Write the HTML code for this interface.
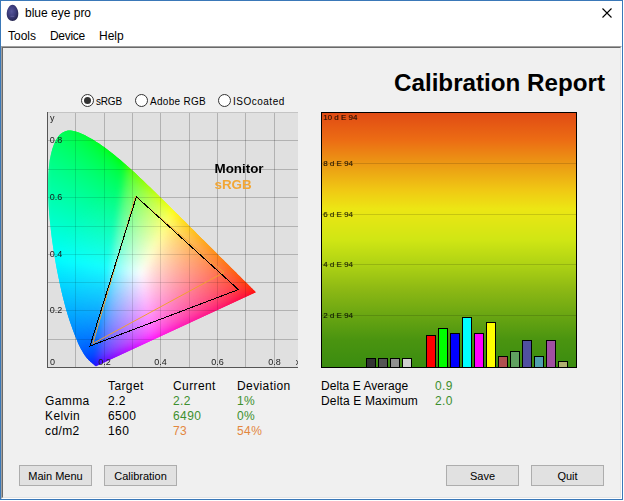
<!DOCTYPE html>
<html><head><meta charset="utf-8">
<style>
*{margin:0;padding:0;box-sizing:border-box}
html,body{width:624px;height:501px;overflow:hidden;background:#ffffff;font-family:"Liberation Sans",sans-serif;color:#000}
.a{position:absolute;white-space:nowrap}
#win{position:absolute;left:0;top:0;width:623px;height:500px;border:1px solid #3a78b8;background:#fff}
#content{position:absolute;left:1px;top:46px;width:621px;height:453px;background:#f0f0f0;border-top:1px solid #a0a0a0;border-left:1px solid #a0a0a0;border-right:1px solid #fff;border-bottom:1px solid #fff}
#content2{position:absolute;left:2px;top:47px;width:619px;height:451px;border-top:1px solid #696969;border-left:1px solid #696969;border-right:1px solid #e3e3e3;border-bottom:1px solid #e3e3e3}
.btn{position:absolute;top:465px;height:21px;width:73px;background:#e1e1e1;border:1px solid #adadad;font-size:11px;text-align:center;line-height:20px}
.radio{position:absolute;top:94px;width:13px;height:13px;border-radius:50%;border:1px solid #333;background:#fff}
.lbl{font-size:10px;top:96px!important}
.t12{font-size:12px;letter-spacing:0.4px}
.g{color:#3d8f2e}
.o{color:#e3873e}
.ax{font-size:8px;color:#222}
.de{font-size:8px;color:rgba(40,20,0,0.75)}
</style></head><body>
<div id="win"></div>
<!-- egg icon -->
<svg class="a" style="left:0;top:0" width="26" height="26" viewBox="0 0 26 26">
<defs><radialGradient id="eg" cx="0.42" cy="0.4" r="0.62"><stop offset="0" stop-color="#56569a"/><stop offset="0.55" stop-color="#3c3c7c"/><stop offset="1" stop-color="#24244e"/></radialGradient></defs>
<path d="M12.5 4.8C15.8 4.8 18.3 9.5 18.3 13.8C18.3 18.2 15.8 21 12.5 21C9.2 21 6.7 18.2 6.7 13.8C6.7 9.5 9.2 4.8 12.5 4.8Z" fill="url(#eg)"/>
<path d="M10.5 16.3L14.3 16.3" stroke="#7a7ab0" stroke-width="0.8" opacity="0.7"/>
</svg>
<div class="a" style="left:25px;top:6px;font-size:12px">blue eye pro</div>
<svg class="a" style="left:601px;top:7px" width="12" height="12" viewBox="0 0 12 12"><path d="M1.5 1.5L10.5 10.5M10.5 1.5L1.5 10.5" stroke="#000" stroke-width="1.1"/></svg>
<div class="a" style="left:8px;top:29px;font-size:12px">Tools</div>
<div class="a" style="left:50px;top:29px;font-size:12px;letter-spacing:-0.3px">Device</div>
<div class="a" style="left:99px;top:29px;font-size:12px">Help</div>
<div id="content"></div><div id="content2"></div>

<div class="a" style="left:394px;top:69px;font-size:24.2px;font-weight:bold">Calibration Report</div>

<!-- radios -->
<div class="radio" style="left:81px"><div style="position:absolute;left:2px;top:2px;width:7px;height:7px;border-radius:50%;background:#333"></div></div>
<div class="a lbl" style="left:96px;top:94px;letter-spacing:-0.2px">sRGB</div>
<div class="radio" style="left:135px"></div>
<div class="a lbl" style="left:150px;top:94px;letter-spacing:0.3px">Adobe RGB</div>
<div class="radio" style="left:218px"></div>
<div class="a lbl" style="left:233px;top:94px;letter-spacing:0.5px">ISOcoated</div>

<!-- CIE plot -->
<div class="a" style="left:47px;top:112px;width:251px;height:256px;background:#e0e0e0;overflow:hidden">
<svg class="a" style="left:0;top:0" width="251" height="256">
<defs>
<filter id="fblur" x="-5%" y="-5%" width="110%" height="110%"><feGaussianBlur stdDeviation="3"/></filter>
<clipPath id="lc"><polygon points="49.4,254.1 49.4,254.1 49.3,254.2 49.3,254.2 49.2,254.2 49.2,254.2 49.2,254.2 49.1,254.2 49.1,254.2 49.0,254.2 48.9,254.2 48.9,254.2 48.8,254.2 48.8,254.2 48.7,254.2 48.7,254.1 48.6,254.1 48.5,254.1 48.5,254.0 48.4,254.0 48.3,253.9 48.2,253.8 48.1,253.8 48.0,253.7 47.9,253.6 47.8,253.5 47.6,253.4 47.5,253.3 47.3,253.1 47.2,253.0 47.0,252.8 46.8,252.6 46.6,252.5 46.4,252.3 46.2,252.1 45.9,251.9 45.7,251.6 45.4,251.4 45.1,251.1 44.8,250.8 44.4,250.5 44.0,250.2 43.7,249.9 43.2,249.5 42.8,249.1 42.4,248.7 41.9,248.2 41.4,247.7 40.8,247.1 40.3,246.5 39.7,245.9 39.1,245.1 38.4,244.2 37.7,243.2 36.9,242.0 36.1,240.7 35.2,239.1 34.2,237.4 33.2,235.5 32.2,233.4 31.0,230.9 29.9,228.1 28.6,225.1 27.3,221.7 25.8,217.8 24.3,213.6 22.7,209.0 21.1,204.0 19.4,198.5 17.8,192.5 16.1,186.0 14.4,179.1 12.8,171.7 11.2,163.9 9.5,155.6 8.0,146.9 6.6,138.3 5.3,129.4 4.1,120.4 3.1,111.3 2.2,102.5 1.6,94.0 1.2,85.5 1.0,77.3 1.0,69.5 1.3,62.0 1.9,54.9 2.7,48.3 3.9,42.4 5.3,37.0 7.0,32.3 8.9,28.2 11.0,24.8 13.2,22.2 15.7,20.5 18.3,19.3 21.0,18.6 23.8,18.5 26.6,18.9 29.5,19.8 32.4,20.8 35.2,21.9 38.1,23.3 41.0,24.9 43.9,26.5 46.6,28.1 49.4,29.9 52.1,31.6 54.7,33.4 57.4,35.3 60.0,37.2 62.6,39.2 65.2,41.2 67.7,43.3 70.3,45.4 72.9,47.5 75.4,49.7 78.0,51.9 80.5,54.2 83.1,56.5 85.6,58.8 88.2,61.1 90.7,63.5 93.2,65.9 95.8,68.3 98.3,70.7 100.8,73.2 103.4,75.6 105.9,78.1 108.5,80.5 111.0,83.0 113.5,85.5 116.1,88.0 118.6,90.5 121.1,93.0 123.6,95.4 126.1,97.9 128.6,100.4 131.1,102.8 133.5,105.3 136.0,107.7 138.4,110.1 140.8,112.5 143.2,114.9 145.6,117.3 147.9,119.6 150.2,121.9 152.5,124.2 154.7,126.4 156.9,128.6 159.1,130.8 161.3,132.9 163.4,135.0 165.4,137.0 167.4,139.0 169.4,141.0 171.2,142.9 173.0,144.7 174.8,146.4 176.5,148.1 178.1,149.7 179.7,151.3 181.2,152.8 182.7,154.3 184.1,155.7 185.4,156.9 186.5,158.1 187.7,159.3 189.1,160.6 190.8,162.4 192.8,164.3 194.7,166.2 196.4,167.9 197.8,169.3 199.0,170.5 200.1,171.6 201.1,172.6 202.0,173.5 202.8,174.3 203.6,175.1 204.2,175.7 204.8,176.3 205.4,176.8 205.8,177.3 206.2,177.7 206.6,178.0 206.9,178.3 207.1,178.6 207.4,178.8 207.6,179.1 207.9,179.4 208.1,179.6 208.3,179.8 208.5,179.9 208.6,180.0 208.6,180.1 208.7,180.2 208.7,180.2"/></clipPath>
</defs>
<g fill="#000" fill-opacity="0.09"><rect x="28" y="0" width="1" height="256"/><rect x="57" y="0" width="1" height="256"/><rect x="85" y="0" width="1" height="256"/><rect x="113" y="0" width="1" height="256"/><rect x="142" y="0" width="1" height="256"/><rect x="170" y="0" width="1" height="256"/><rect x="198" y="0" width="1" height="256"/><rect x="227" y="0" width="1" height="256"/><rect x="0" y="227" width="251" height="1"/><rect x="0" y="198" width="251" height="1"/><rect x="0" y="170" width="251" height="1"/><rect x="0" y="142" width="251" height="1"/><rect x="0" y="114" width="251" height="1"/><rect x="0" y="85" width="251" height="1"/><rect x="0" y="57" width="251" height="1"/><rect x="0" y="28" width="251" height="1"/></g>
<g clip-path="url(#lc)"><g filter="url(#fblur)"><rect x="0" y="6" width="6" height="6" fill="#00ff55"/><rect x="6" y="6" width="6" height="6" fill="#00ff4d"/><rect x="12" y="6" width="6" height="6" fill="#00ff44"/><rect x="18" y="6" width="6" height="6" fill="#00ff3a"/><rect x="24" y="6" width="6" height="6" fill="#00ff2c"/><rect x="30" y="6" width="6" height="6" fill="#00ff11"/><rect x="36" y="6" width="6" height="6" fill="#00ff00"/><rect x="42" y="6" width="6" height="6" fill="#00ff00"/><rect x="48" y="6" width="6" height="6" fill="#00ff00"/><rect x="0" y="12" width="6" height="6" fill="#00ff5d"/><rect x="6" y="12" width="6" height="6" fill="#00ff56"/><rect x="12" y="12" width="6" height="6" fill="#00ff4f"/><rect x="18" y="12" width="6" height="6" fill="#00ff46"/><rect x="24" y="12" width="6" height="6" fill="#00ff3b"/><rect x="30" y="12" width="6" height="6" fill="#00ff2d"/><rect x="36" y="12" width="6" height="6" fill="#00ff12"/><rect x="42" y="12" width="6" height="6" fill="#00ff00"/><rect x="48" y="12" width="6" height="6" fill="#00ff00"/><rect x="54" y="12" width="6" height="6" fill="#00ff00"/><rect x="0" y="18" width="6" height="6" fill="#00ff65"/><rect x="6" y="18" width="6" height="6" fill="#00ff5e"/><rect x="12" y="18" width="6" height="6" fill="#00ff58"/><rect x="18" y="18" width="6" height="6" fill="#00ff50"/><rect x="24" y="18" width="6" height="6" fill="#00ff47"/><rect x="30" y="18" width="6" height="6" fill="#00ff3c"/><rect x="36" y="18" width="6" height="6" fill="#00ff2e"/><rect x="42" y="18" width="6" height="6" fill="#00ff13"/><rect x="48" y="18" width="6" height="6" fill="#00ff00"/><rect x="54" y="18" width="6" height="6" fill="#00ff00"/><rect x="60" y="18" width="6" height="6" fill="#00ff00"/><rect x="0" y="24" width="6" height="6" fill="#00ff6c"/><rect x="6" y="24" width="6" height="6" fill="#00ff66"/><rect x="12" y="24" width="6" height="6" fill="#00ff60"/><rect x="18" y="24" width="6" height="6" fill="#00ff59"/><rect x="24" y="24" width="6" height="6" fill="#00ff51"/><rect x="30" y="24" width="6" height="6" fill="#00ff48"/><rect x="36" y="24" width="6" height="6" fill="#00ff3d"/><rect x="42" y="24" width="6" height="6" fill="#00ff2f"/><rect x="48" y="24" width="6" height="6" fill="#00ff14"/><rect x="54" y="24" width="6" height="6" fill="#00ff00"/><rect x="60" y="24" width="6" height="6" fill="#00ff00"/><rect x="66" y="24" width="6" height="6" fill="#00ff00"/><rect x="0" y="30" width="6" height="6" fill="#00ff73"/><rect x="6" y="30" width="6" height="6" fill="#00ff6e"/><rect x="12" y="30" width="6" height="6" fill="#00ff68"/><rect x="18" y="30" width="6" height="6" fill="#00ff62"/><rect x="24" y="30" width="6" height="6" fill="#00ff5b"/><rect x="30" y="30" width="6" height="6" fill="#00ff53"/><rect x="36" y="30" width="6" height="6" fill="#00ff4a"/><rect x="42" y="30" width="6" height="6" fill="#00ff3f"/><rect x="48" y="30" width="6" height="6" fill="#00ff30"/><rect x="54" y="30" width="6" height="6" fill="#00ff15"/><rect x="60" y="30" width="6" height="6" fill="#00ff00"/><rect x="66" y="30" width="6" height="6" fill="#00ff00"/><rect x="72" y="30" width="6" height="6" fill="#00ff00"/><rect x="0" y="36" width="6" height="6" fill="#00ff7a"/><rect x="6" y="36" width="6" height="6" fill="#00ff75"/><rect x="12" y="36" width="6" height="6" fill="#00ff70"/><rect x="18" y="36" width="6" height="6" fill="#00ff6a"/><rect x="24" y="36" width="6" height="6" fill="#00ff64"/><rect x="30" y="36" width="6" height="6" fill="#00ff5d"/><rect x="36" y="36" width="6" height="6" fill="#00ff55"/><rect x="42" y="36" width="6" height="6" fill="#00ff4b"/><rect x="48" y="36" width="6" height="6" fill="#00ff40"/><rect x="54" y="36" width="6" height="6" fill="#00ff31"/><rect x="60" y="36" width="6" height="6" fill="#00ff15"/><rect x="66" y="36" width="6" height="6" fill="#00ff00"/><rect x="72" y="36" width="6" height="6" fill="#00ff00"/><rect x="78" y="36" width="6" height="6" fill="#09ff00"/><rect x="0" y="42" width="6" height="6" fill="#00ff81"/><rect x="6" y="42" width="6" height="6" fill="#00ff7c"/><rect x="12" y="42" width="6" height="6" fill="#00ff77"/><rect x="18" y="42" width="6" height="6" fill="#00ff72"/><rect x="24" y="42" width="6" height="6" fill="#00ff6c"/><rect x="30" y="42" width="6" height="6" fill="#00ff66"/><rect x="36" y="42" width="6" height="6" fill="#00ff5f"/><rect x="42" y="42" width="6" height="6" fill="#00ff56"/><rect x="48" y="42" width="6" height="6" fill="#00ff4d"/><rect x="54" y="42" width="6" height="6" fill="#00ff42"/><rect x="60" y="42" width="6" height="6" fill="#00ff33"/><rect x="66" y="42" width="6" height="6" fill="#00ff16"/><rect x="72" y="42" width="6" height="6" fill="#00ff00"/><rect x="78" y="42" width="6" height="6" fill="#1bff00"/><rect x="84" y="42" width="6" height="6" fill="#4aff00"/><rect x="0" y="48" width="6" height="6" fill="#00ff88"/><rect x="6" y="48" width="6" height="6" fill="#00ff83"/><rect x="12" y="48" width="6" height="6" fill="#00ff7f"/><rect x="18" y="48" width="6" height="6" fill="#00ff7a"/><rect x="24" y="48" width="6" height="6" fill="#00ff74"/><rect x="30" y="48" width="6" height="6" fill="#00ff6e"/><rect x="36" y="48" width="6" height="6" fill="#00ff68"/><rect x="42" y="48" width="6" height="6" fill="#00ff61"/><rect x="48" y="48" width="6" height="6" fill="#00ff58"/><rect x="54" y="48" width="6" height="6" fill="#00ff4f"/><rect x="60" y="48" width="6" height="6" fill="#00ff43"/><rect x="66" y="48" width="6" height="6" fill="#00ff34"/><rect x="72" y="48" width="6" height="6" fill="#00ff17"/><rect x="78" y="48" width="6" height="6" fill="#33ff00"/><rect x="84" y="48" width="6" height="6" fill="#55ff00"/><rect x="90" y="48" width="6" height="6" fill="#6cff00"/><rect x="0" y="54" width="6" height="6" fill="#00ff8f"/><rect x="6" y="54" width="6" height="6" fill="#00ff8a"/><rect x="12" y="54" width="6" height="6" fill="#00ff86"/><rect x="18" y="54" width="6" height="6" fill="#00ff81"/><rect x="24" y="54" width="6" height="6" fill="#00ff7c"/><rect x="30" y="54" width="6" height="6" fill="#00ff77"/><rect x="36" y="54" width="6" height="6" fill="#00ff71"/><rect x="42" y="54" width="6" height="6" fill="#00ff6a"/><rect x="48" y="54" width="6" height="6" fill="#00ff63"/><rect x="54" y="54" width="6" height="6" fill="#00ff5a"/><rect x="60" y="54" width="6" height="6" fill="#00ff51"/><rect x="66" y="54" width="6" height="6" fill="#00ff45"/><rect x="72" y="54" width="6" height="6" fill="#03ff36"/><rect x="78" y="54" width="6" height="6" fill="#3eff19"/><rect x="84" y="54" width="6" height="6" fill="#5fff01"/><rect x="90" y="54" width="6" height="6" fill="#74ff00"/><rect x="96" y="54" width="6" height="6" fill="#86ff00"/><rect x="0" y="60" width="6" height="6" fill="#00ff95"/><rect x="6" y="60" width="6" height="6" fill="#00ff91"/><rect x="12" y="60" width="6" height="6" fill="#00ff8d"/><rect x="18" y="60" width="6" height="6" fill="#00ff89"/><rect x="24" y="60" width="6" height="6" fill="#00ff84"/><rect x="30" y="60" width="6" height="6" fill="#00ff7f"/><rect x="36" y="60" width="6" height="6" fill="#00ff79"/><rect x="42" y="60" width="6" height="6" fill="#00ff73"/><rect x="48" y="60" width="6" height="6" fill="#00ff6c"/><rect x="54" y="60" width="6" height="6" fill="#00ff65"/><rect x="60" y="60" width="6" height="6" fill="#00ff5c"/><rect x="66" y="60" width="6" height="6" fill="#00ff53"/><rect x="72" y="60" width="6" height="6" fill="#0bff47"/><rect x="78" y="60" width="6" height="6" fill="#46ff37"/><rect x="84" y="60" width="6" height="6" fill="#66ff1b"/><rect x="90" y="60" width="6" height="6" fill="#7dff01"/><rect x="96" y="60" width="6" height="6" fill="#8eff00"/><rect x="102" y="60" width="6" height="6" fill="#9dff00"/><rect x="0" y="66" width="6" height="6" fill="#00ff9c"/><rect x="6" y="66" width="6" height="6" fill="#00ff98"/><rect x="12" y="66" width="6" height="6" fill="#00ff94"/><rect x="18" y="66" width="6" height="6" fill="#00ff90"/><rect x="24" y="66" width="6" height="6" fill="#00ff8c"/><rect x="30" y="66" width="6" height="6" fill="#00ff87"/><rect x="36" y="66" width="6" height="6" fill="#00ff82"/><rect x="42" y="66" width="6" height="6" fill="#00ff7c"/><rect x="48" y="66" width="6" height="6" fill="#00ff76"/><rect x="54" y="66" width="6" height="6" fill="#00ff6f"/><rect x="60" y="66" width="6" height="6" fill="#00ff67"/><rect x="66" y="66" width="6" height="6" fill="#00ff5f"/><rect x="72" y="66" width="6" height="6" fill="#11ff55"/><rect x="78" y="66" width="6" height="6" fill="#4dff49"/><rect x="84" y="66" width="6" height="6" fill="#6cff39"/><rect x="90" y="66" width="6" height="6" fill="#83ff1d"/><rect x="96" y="66" width="6" height="6" fill="#96ff02"/><rect x="102" y="66" width="6" height="6" fill="#a5ff00"/><rect x="108" y="66" width="6" height="6" fill="#b3ff00"/><rect x="0" y="72" width="6" height="6" fill="#00ffa3"/><rect x="6" y="72" width="6" height="6" fill="#00ff9f"/><rect x="12" y="72" width="6" height="6" fill="#00ff9c"/><rect x="18" y="72" width="6" height="6" fill="#00ff98"/><rect x="24" y="72" width="6" height="6" fill="#00ff93"/><rect x="30" y="72" width="6" height="6" fill="#00ff8f"/><rect x="36" y="72" width="6" height="6" fill="#00ff8a"/><rect x="42" y="72" width="6" height="6" fill="#00ff84"/><rect x="48" y="72" width="6" height="6" fill="#00ff7f"/><rect x="54" y="72" width="6" height="6" fill="#00ff78"/><rect x="60" y="72" width="6" height="6" fill="#00ff72"/><rect x="66" y="72" width="6" height="6" fill="#00ff6a"/><rect x="72" y="72" width="6" height="6" fill="#1dff61"/><rect x="78" y="72" width="6" height="6" fill="#54ff57"/><rect x="84" y="72" width="6" height="6" fill="#71ff4b"/><rect x="90" y="72" width="6" height="6" fill="#88ff3b"/><rect x="96" y="72" width="6" height="6" fill="#9cff1f"/><rect x="102" y="72" width="6" height="6" fill="#adff02"/><rect x="108" y="72" width="6" height="6" fill="#bbff00"/><rect x="114" y="72" width="6" height="6" fill="#c8ff00"/><rect x="0" y="78" width="6" height="6" fill="#00ffaa"/><rect x="6" y="78" width="6" height="6" fill="#00ffa6"/><rect x="12" y="78" width="6" height="6" fill="#00ffa3"/><rect x="18" y="78" width="6" height="6" fill="#00ff9f"/><rect x="24" y="78" width="6" height="6" fill="#00ff9b"/><rect x="30" y="78" width="6" height="6" fill="#00ff97"/><rect x="36" y="78" width="6" height="6" fill="#00ff92"/><rect x="42" y="78" width="6" height="6" fill="#00ff8d"/><rect x="48" y="78" width="6" height="6" fill="#00ff88"/><rect x="54" y="78" width="6" height="6" fill="#00ff82"/><rect x="60" y="78" width="6" height="6" fill="#00ff7b"/><rect x="66" y="78" width="6" height="6" fill="#00ff74"/><rect x="72" y="78" width="6" height="6" fill="#24ff6d"/><rect x="78" y="78" width="6" height="6" fill="#5aff64"/><rect x="84" y="78" width="6" height="6" fill="#77ff59"/><rect x="90" y="78" width="6" height="6" fill="#8eff4d"/><rect x="96" y="78" width="6" height="6" fill="#a2ff3d"/><rect x="102" y="78" width="6" height="6" fill="#b3ff20"/><rect x="108" y="78" width="6" height="6" fill="#c3ff02"/><rect x="114" y="78" width="6" height="6" fill="#d0ff00"/><rect x="120" y="78" width="6" height="6" fill="#dcff00"/><rect x="0" y="84" width="6" height="6" fill="#00ffb1"/><rect x="6" y="84" width="6" height="6" fill="#00ffae"/><rect x="12" y="84" width="6" height="6" fill="#00ffaa"/><rect x="18" y="84" width="6" height="6" fill="#00ffa6"/><rect x="24" y="84" width="6" height="6" fill="#00ffa3"/><rect x="30" y="84" width="6" height="6" fill="#00ff9f"/><rect x="36" y="84" width="6" height="6" fill="#00ff9a"/><rect x="42" y="84" width="6" height="6" fill="#00ff95"/><rect x="48" y="84" width="6" height="6" fill="#00ff90"/><rect x="54" y="84" width="6" height="6" fill="#00ff8b"/><rect x="60" y="84" width="6" height="6" fill="#00ff85"/><rect x="66" y="84" width="6" height="6" fill="#00ff7f"/><rect x="72" y="84" width="6" height="6" fill="#34ff78"/><rect x="78" y="84" width="6" height="6" fill="#61ff70"/><rect x="84" y="84" width="6" height="6" fill="#7dff67"/><rect x="90" y="84" width="6" height="6" fill="#94ff5c"/><rect x="96" y="84" width="6" height="6" fill="#a7ff4f"/><rect x="102" y="84" width="6" height="6" fill="#b9ff3f"/><rect x="108" y="84" width="6" height="6" fill="#caff22"/><rect x="114" y="84" width="6" height="6" fill="#d9ff02"/><rect x="120" y="84" width="6" height="6" fill="#e5ff00"/><rect x="126" y="84" width="6" height="6" fill="#f2ff00"/><rect x="0" y="90" width="6" height="6" fill="#00ffb8"/><rect x="6" y="90" width="6" height="6" fill="#00ffb5"/><rect x="12" y="90" width="6" height="6" fill="#00ffb2"/><rect x="18" y="90" width="6" height="6" fill="#00ffae"/><rect x="24" y="90" width="6" height="6" fill="#00ffaa"/><rect x="30" y="90" width="6" height="6" fill="#00ffa7"/><rect x="36" y="90" width="6" height="6" fill="#00ffa2"/><rect x="42" y="90" width="6" height="6" fill="#00ff9e"/><rect x="48" y="90" width="6" height="6" fill="#00ff99"/><rect x="54" y="90" width="6" height="6" fill="#00ff94"/><rect x="60" y="90" width="6" height="6" fill="#00ff8f"/><rect x="66" y="90" width="6" height="6" fill="#00ff89"/><rect x="72" y="90" width="6" height="6" fill="#3fff82"/><rect x="78" y="90" width="6" height="6" fill="#68ff7b"/><rect x="84" y="90" width="6" height="6" fill="#83ff73"/><rect x="90" y="90" width="6" height="6" fill="#99ff6a"/><rect x="96" y="90" width="6" height="6" fill="#adff5f"/><rect x="102" y="90" width="6" height="6" fill="#bfff52"/><rect x="108" y="90" width="6" height="6" fill="#d0ff41"/><rect x="114" y="90" width="6" height="6" fill="#e0ff24"/><rect x="120" y="90" width="6" height="6" fill="#eeff03"/><rect x="126" y="90" width="6" height="6" fill="#fbff00"/><rect x="132" y="90" width="6" height="6" fill="#fff700"/><rect x="0" y="96" width="6" height="6" fill="#00ffbf"/><rect x="6" y="96" width="6" height="6" fill="#00ffbc"/><rect x="12" y="96" width="6" height="6" fill="#00ffb9"/><rect x="18" y="96" width="6" height="6" fill="#00ffb6"/><rect x="24" y="96" width="6" height="6" fill="#00ffb2"/><rect x="30" y="96" width="6" height="6" fill="#00ffaf"/><rect x="36" y="96" width="6" height="6" fill="#00ffab"/><rect x="42" y="96" width="6" height="6" fill="#00ffa7"/><rect x="48" y="96" width="6" height="6" fill="#00ffa2"/><rect x="54" y="96" width="6" height="6" fill="#00ff9d"/><rect x="60" y="96" width="6" height="6" fill="#00ff98"/><rect x="66" y="96" width="6" height="6" fill="#07ff93"/><rect x="72" y="96" width="6" height="6" fill="#49ff8d"/><rect x="78" y="96" width="6" height="6" fill="#6eff86"/><rect x="84" y="96" width="6" height="6" fill="#89ff7f"/><rect x="90" y="96" width="6" height="6" fill="#9fff76"/><rect x="96" y="96" width="6" height="6" fill="#b3ff6d"/><rect x="102" y="96" width="6" height="6" fill="#c6ff62"/><rect x="108" y="96" width="6" height="6" fill="#d7ff55"/><rect x="114" y="96" width="6" height="6" fill="#e7ff43"/><rect x="120" y="96" width="6" height="6" fill="#f7ff26"/><rect x="126" y="96" width="6" height="6" fill="#fff903"/><rect x="132" y="96" width="6" height="6" fill="#ffee00"/><rect x="138" y="96" width="6" height="6" fill="#ffe400"/><rect x="0" y="102" width="6" height="6" fill="#00ffc7"/><rect x="6" y="102" width="6" height="6" fill="#00ffc4"/><rect x="12" y="102" width="6" height="6" fill="#00ffc1"/><rect x="18" y="102" width="6" height="6" fill="#00ffbe"/><rect x="24" y="102" width="6" height="6" fill="#00ffba"/><rect x="30" y="102" width="6" height="6" fill="#00ffb7"/><rect x="36" y="102" width="6" height="6" fill="#00ffb3"/><rect x="42" y="102" width="6" height="6" fill="#00ffaf"/><rect x="48" y="102" width="6" height="6" fill="#00ffab"/><rect x="54" y="102" width="6" height="6" fill="#00ffa7"/><rect x="60" y="102" width="6" height="6" fill="#00ffa2"/><rect x="66" y="102" width="6" height="6" fill="#0eff9d"/><rect x="72" y="102" width="6" height="6" fill="#51ff97"/><rect x="78" y="102" width="6" height="6" fill="#75ff91"/><rect x="84" y="102" width="6" height="6" fill="#8fff8a"/><rect x="90" y="102" width="6" height="6" fill="#a6ff83"/><rect x="96" y="102" width="6" height="6" fill="#baff7a"/><rect x="102" y="102" width="6" height="6" fill="#ccff71"/><rect x="108" y="102" width="6" height="6" fill="#deff66"/><rect x="114" y="102" width="6" height="6" fill="#eeff58"/><rect x="120" y="102" width="6" height="6" fill="#fdfd46"/><rect x="126" y="102" width="6" height="6" fill="#fff126"/><rect x="132" y="102" width="6" height="6" fill="#ffe503"/><rect x="138" y="102" width="6" height="6" fill="#ffdb00"/><rect x="144" y="102" width="6" height="6" fill="#ffd200"/><rect x="0" y="108" width="6" height="6" fill="#00ffce"/><rect x="6" y="108" width="6" height="6" fill="#00ffcc"/><rect x="12" y="108" width="6" height="6" fill="#00ffc9"/><rect x="18" y="108" width="6" height="6" fill="#00ffc6"/><rect x="24" y="108" width="6" height="6" fill="#00ffc3"/><rect x="30" y="108" width="6" height="6" fill="#00ffbf"/><rect x="36" y="108" width="6" height="6" fill="#00ffbc"/><rect x="42" y="108" width="6" height="6" fill="#00ffb8"/><rect x="48" y="108" width="6" height="6" fill="#00ffb4"/><rect x="54" y="108" width="6" height="6" fill="#00ffb0"/><rect x="60" y="108" width="6" height="6" fill="#00ffac"/><rect x="66" y="108" width="6" height="6" fill="#18ffa7"/><rect x="72" y="108" width="6" height="6" fill="#59ffa2"/><rect x="78" y="108" width="6" height="6" fill="#7cff9c"/><rect x="84" y="108" width="6" height="6" fill="#96ff96"/><rect x="90" y="108" width="6" height="6" fill="#acff8f"/><rect x="96" y="108" width="6" height="6" fill="#c1ff87"/><rect x="102" y="108" width="6" height="6" fill="#d3ff7f"/><rect x="108" y="108" width="6" height="6" fill="#e5ff75"/><rect x="114" y="108" width="6" height="6" fill="#f6ff69"/><rect x="120" y="108" width="6" height="6" fill="#fff859"/><rect x="126" y="108" width="6" height="6" fill="#ffe943"/><rect x="132" y="108" width="6" height="6" fill="#ffdd25"/><rect x="138" y="108" width="6" height="6" fill="#ffd203"/><rect x="144" y="108" width="6" height="6" fill="#ffca00"/><rect x="150" y="108" width="6" height="6" fill="#ffc200"/><rect x="0" y="114" width="6" height="6" fill="#00ffd6"/><rect x="6" y="114" width="6" height="6" fill="#00ffd4"/><rect x="12" y="114" width="6" height="6" fill="#00ffd1"/><rect x="18" y="114" width="6" height="6" fill="#00ffce"/><rect x="24" y="114" width="6" height="6" fill="#00ffcb"/><rect x="30" y="114" width="6" height="6" fill="#00ffc8"/><rect x="36" y="114" width="6" height="6" fill="#00ffc5"/><rect x="42" y="114" width="6" height="6" fill="#00ffc1"/><rect x="48" y="114" width="6" height="6" fill="#00ffbe"/><rect x="54" y="114" width="6" height="6" fill="#00ffba"/><rect x="60" y="114" width="6" height="6" fill="#00ffb6"/><rect x="66" y="114" width="6" height="6" fill="#24ffb1"/><rect x="72" y="114" width="6" height="6" fill="#61ffac"/><rect x="78" y="114" width="6" height="6" fill="#83ffa7"/><rect x="84" y="114" width="6" height="6" fill="#9dffa1"/><rect x="90" y="114" width="6" height="6" fill="#b3ff9b"/><rect x="96" y="114" width="6" height="6" fill="#c8ff94"/><rect x="102" y="114" width="6" height="6" fill="#dbff8c"/><rect x="108" y="114" width="6" height="6" fill="#edff83"/><rect x="114" y="114" width="6" height="6" fill="#fdfd78"/><rect x="120" y="114" width="6" height="6" fill="#ffef67"/><rect x="126" y="114" width="6" height="6" fill="#ffe254"/><rect x="132" y="114" width="6" height="6" fill="#ffd640"/><rect x="138" y="114" width="6" height="6" fill="#ffcb24"/><rect x="144" y="114" width="6" height="6" fill="#ffc203"/><rect x="150" y="114" width="6" height="6" fill="#ffba00"/><rect x="156" y="114" width="6" height="6" fill="#ffb300"/><rect x="0" y="120" width="6" height="6" fill="#00ffde"/><rect x="6" y="120" width="6" height="6" fill="#00ffdc"/><rect x="12" y="120" width="6" height="6" fill="#00ffd9"/><rect x="18" y="120" width="6" height="6" fill="#00ffd7"/><rect x="24" y="120" width="6" height="6" fill="#00ffd4"/><rect x="30" y="120" width="6" height="6" fill="#00ffd1"/><rect x="36" y="120" width="6" height="6" fill="#00ffce"/><rect x="42" y="120" width="6" height="6" fill="#00ffcb"/><rect x="48" y="120" width="6" height="6" fill="#00ffc7"/><rect x="54" y="120" width="6" height="6" fill="#00ffc4"/><rect x="60" y="120" width="6" height="6" fill="#00ffc0"/><rect x="66" y="120" width="6" height="6" fill="#2fffbc"/><rect x="72" y="120" width="6" height="6" fill="#69ffb7"/><rect x="78" y="120" width="6" height="6" fill="#8affb2"/><rect x="84" y="120" width="6" height="6" fill="#a4ffad"/><rect x="90" y="120" width="6" height="6" fill="#bbffa7"/><rect x="96" y="120" width="6" height="6" fill="#d0ffa1"/><rect x="102" y="120" width="6" height="6" fill="#e3ff9a"/><rect x="108" y="120" width="6" height="6" fill="#f6ff92"/><rect x="114" y="120" width="6" height="6" fill="#fff784"/><rect x="120" y="120" width="6" height="6" fill="#ffe773"/><rect x="126" y="120" width="6" height="6" fill="#ffda62"/><rect x="132" y="120" width="6" height="6" fill="#ffce51"/><rect x="138" y="120" width="6" height="6" fill="#ffc43e"/><rect x="144" y="120" width="6" height="6" fill="#ffba23"/><rect x="150" y="120" width="6" height="6" fill="#ffb203"/><rect x="156" y="120" width="6" height="6" fill="#ffab00"/><rect x="162" y="120" width="6" height="6" fill="#ffa500"/><rect x="0" y="126" width="6" height="6" fill="#00ffe7"/><rect x="6" y="126" width="6" height="6" fill="#00ffe4"/><rect x="12" y="126" width="6" height="6" fill="#00ffe2"/><rect x="18" y="126" width="6" height="6" fill="#00ffe0"/><rect x="24" y="126" width="6" height="6" fill="#00ffdd"/><rect x="30" y="126" width="6" height="6" fill="#00ffda"/><rect x="36" y="126" width="6" height="6" fill="#00ffd8"/><rect x="42" y="126" width="6" height="6" fill="#00ffd5"/><rect x="48" y="126" width="6" height="6" fill="#00ffd1"/><rect x="54" y="126" width="6" height="6" fill="#00ffce"/><rect x="60" y="126" width="6" height="6" fill="#00ffca"/><rect x="66" y="126" width="6" height="6" fill="#40ffc6"/><rect x="72" y="126" width="6" height="6" fill="#71ffc2"/><rect x="78" y="126" width="6" height="6" fill="#91ffbe"/><rect x="84" y="126" width="6" height="6" fill="#acffb9"/><rect x="90" y="126" width="6" height="6" fill="#c3ffb3"/><rect x="96" y="126" width="6" height="6" fill="#d8ffae"/><rect x="102" y="126" width="6" height="6" fill="#ecffa7"/><rect x="108" y="126" width="6" height="6" fill="#fdfd9e"/><rect x="114" y="126" width="6" height="6" fill="#ffee8e"/><rect x="120" y="126" width="6" height="6" fill="#ffdf7d"/><rect x="126" y="126" width="6" height="6" fill="#ffd26d"/><rect x="132" y="126" width="6" height="6" fill="#ffc75e"/><rect x="138" y="126" width="6" height="6" fill="#ffbc4e"/><rect x="144" y="126" width="6" height="6" fill="#ffb33c"/><rect x="150" y="126" width="6" height="6" fill="#ffab22"/><rect x="156" y="126" width="6" height="6" fill="#ffa303"/><rect x="162" y="126" width="6" height="6" fill="#ff9d00"/><rect x="168" y="126" width="6" height="6" fill="#ff9700"/><rect x="0" y="132" width="6" height="6" fill="#00ffef"/><rect x="6" y="132" width="6" height="6" fill="#00ffed"/><rect x="12" y="132" width="6" height="6" fill="#00ffeb"/><rect x="18" y="132" width="6" height="6" fill="#00ffe9"/><rect x="24" y="132" width="6" height="6" fill="#00ffe7"/><rect x="30" y="132" width="6" height="6" fill="#00ffe4"/><rect x="36" y="132" width="6" height="6" fill="#00ffe1"/><rect x="42" y="132" width="6" height="6" fill="#00ffdf"/><rect x="48" y="132" width="6" height="6" fill="#00ffdc"/><rect x="54" y="132" width="6" height="6" fill="#00ffd9"/><rect x="60" y="132" width="6" height="6" fill="#02ffd5"/><rect x="66" y="132" width="6" height="6" fill="#4cffd2"/><rect x="72" y="132" width="6" height="6" fill="#7affce"/><rect x="78" y="132" width="6" height="6" fill="#99ffca"/><rect x="84" y="132" width="6" height="6" fill="#b4ffc5"/><rect x="90" y="132" width="6" height="6" fill="#cbffc0"/><rect x="96" y="132" width="6" height="6" fill="#e1ffbb"/><rect x="102" y="132" width="6" height="6" fill="#f5ffb5"/><rect x="108" y="132" width="6" height="6" fill="#fff5a8"/><rect x="114" y="132" width="6" height="6" fill="#ffe596"/><rect x="120" y="132" width="6" height="6" fill="#ffd686"/><rect x="126" y="132" width="6" height="6" fill="#ffca77"/><rect x="132" y="132" width="6" height="6" fill="#ffbf68"/><rect x="138" y="132" width="6" height="6" fill="#ffb55a"/><rect x="144" y="132" width="6" height="6" fill="#ffac4b"/><rect x="150" y="132" width="6" height="6" fill="#ffa43a"/><rect x="156" y="132" width="6" height="6" fill="#ff9c21"/><rect x="162" y="132" width="6" height="6" fill="#ff9503"/><rect x="168" y="132" width="6" height="6" fill="#ff9000"/><rect x="174" y="132" width="6" height="6" fill="#ff8a00"/><rect x="0" y="138" width="6" height="6" fill="#00fff8"/><rect x="6" y="138" width="6" height="6" fill="#00fff7"/><rect x="12" y="138" width="6" height="6" fill="#00fff5"/><rect x="18" y="138" width="6" height="6" fill="#00fff3"/><rect x="24" y="138" width="6" height="6" fill="#00fff0"/><rect x="30" y="138" width="6" height="6" fill="#00ffee"/><rect x="36" y="138" width="6" height="6" fill="#00ffec"/><rect x="42" y="138" width="6" height="6" fill="#00ffe9"/><rect x="48" y="138" width="6" height="6" fill="#00ffe7"/><rect x="54" y="138" width="6" height="6" fill="#00ffe4"/><rect x="60" y="138" width="6" height="6" fill="#0cffe1"/><rect x="66" y="138" width="6" height="6" fill="#57ffdd"/><rect x="72" y="138" width="6" height="6" fill="#82ffda"/><rect x="78" y="138" width="6" height="6" fill="#a1ffd6"/><rect x="84" y="138" width="6" height="6" fill="#bcffd2"/><rect x="90" y="138" width="6" height="6" fill="#d4ffce"/><rect x="96" y="138" width="6" height="6" fill="#eaffc9"/><rect x="102" y="138" width="6" height="6" fill="#fdfcc1"/><rect x="108" y="138" width="6" height="6" fill="#ffecaf"/><rect x="114" y="138" width="6" height="6" fill="#ffdc9e"/><rect x="120" y="138" width="6" height="6" fill="#ffce8e"/><rect x="126" y="138" width="6" height="6" fill="#ffc27f"/><rect x="132" y="138" width="6" height="6" fill="#ffb772"/><rect x="138" y="138" width="6" height="6" fill="#ffad64"/><rect x="144" y="138" width="6" height="6" fill="#ffa557"/><rect x="150" y="138" width="6" height="6" fill="#ff9c48"/><rect x="156" y="138" width="6" height="6" fill="#ff9538"/><rect x="162" y="138" width="6" height="6" fill="#ff8e21"/><rect x="168" y="138" width="6" height="6" fill="#ff8803"/><rect x="174" y="138" width="6" height="6" fill="#ff8200"/><rect x="180" y="138" width="6" height="6" fill="#ff7d00"/><rect x="0" y="144" width="6" height="6" fill="#00fcff"/><rect x="6" y="144" width="6" height="6" fill="#00fdfe"/><rect x="12" y="144" width="6" height="6" fill="#00fefe"/><rect x="18" y="144" width="6" height="6" fill="#00fffc"/><rect x="24" y="144" width="6" height="6" fill="#00fffb"/><rect x="30" y="144" width="6" height="6" fill="#00fff9"/><rect x="36" y="144" width="6" height="6" fill="#00fff7"/><rect x="42" y="144" width="6" height="6" fill="#00fff4"/><rect x="48" y="144" width="6" height="6" fill="#00fff2"/><rect x="54" y="144" width="6" height="6" fill="#00fff0"/><rect x="60" y="144" width="6" height="6" fill="#12ffed"/><rect x="66" y="144" width="6" height="6" fill="#62ffea"/><rect x="72" y="144" width="6" height="6" fill="#8bffe7"/><rect x="78" y="144" width="6" height="6" fill="#aaffe3"/><rect x="84" y="144" width="6" height="6" fill="#c5ffe0"/><rect x="90" y="144" width="6" height="6" fill="#deffdc"/><rect x="96" y="144" width="6" height="6" fill="#f5ffd7"/><rect x="102" y="144" width="6" height="6" fill="#fff4c9"/><rect x="108" y="144" width="6" height="6" fill="#ffe2b6"/><rect x="114" y="144" width="6" height="6" fill="#ffd2a5"/><rect x="120" y="144" width="6" height="6" fill="#ffc595"/><rect x="126" y="144" width="6" height="6" fill="#ffb987"/><rect x="132" y="144" width="6" height="6" fill="#ffaf7a"/><rect x="138" y="144" width="6" height="6" fill="#ffa66d"/><rect x="144" y="144" width="6" height="6" fill="#ff9d60"/><rect x="150" y="144" width="6" height="6" fill="#ff9554"/><rect x="156" y="144" width="6" height="6" fill="#ff8e46"/><rect x="162" y="144" width="6" height="6" fill="#ff8737"/><rect x="168" y="144" width="6" height="6" fill="#ff8020"/><rect x="174" y="144" width="6" height="6" fill="#ff7a03"/><rect x="180" y="144" width="6" height="6" fill="#ff7500"/><rect x="186" y="144" width="6" height="6" fill="#ff7000"/><rect x="0" y="150" width="6" height="6" fill="#00f3ff"/><rect x="6" y="150" width="6" height="6" fill="#00f4ff"/><rect x="12" y="150" width="6" height="6" fill="#00f5ff"/><rect x="18" y="150" width="6" height="6" fill="#00f7ff"/><rect x="24" y="150" width="6" height="6" fill="#00f8ff"/><rect x="30" y="150" width="6" height="6" fill="#00faff"/><rect x="36" y="150" width="6" height="6" fill="#00fcff"/><rect x="42" y="150" width="6" height="6" fill="#00fdfe"/><rect x="48" y="150" width="6" height="6" fill="#00fefd"/><rect x="54" y="150" width="6" height="6" fill="#00fffc"/><rect x="60" y="150" width="6" height="6" fill="#22fffa"/><rect x="66" y="150" width="6" height="6" fill="#6cfff7"/><rect x="72" y="150" width="6" height="6" fill="#94fff4"/><rect x="78" y="150" width="6" height="6" fill="#b4fff1"/><rect x="84" y="150" width="6" height="6" fill="#cfffee"/><rect x="90" y="150" width="6" height="6" fill="#e9ffeb"/><rect x="96" y="150" width="6" height="6" fill="#fdfbe3"/><rect x="102" y="150" width="6" height="6" fill="#ffe9cf"/><rect x="108" y="150" width="6" height="6" fill="#ffd8bc"/><rect x="114" y="150" width="6" height="6" fill="#ffc9ab"/><rect x="120" y="150" width="6" height="6" fill="#ffbc9c"/><rect x="126" y="150" width="6" height="6" fill="#ffb18e"/><rect x="132" y="150" width="6" height="6" fill="#ffa781"/><rect x="138" y="150" width="6" height="6" fill="#ff9d75"/><rect x="144" y="150" width="6" height="6" fill="#ff9569"/><rect x="150" y="150" width="6" height="6" fill="#ff8d5d"/><rect x="156" y="150" width="6" height="6" fill="#ff8651"/><rect x="162" y="150" width="6" height="6" fill="#ff7f44"/><rect x="168" y="150" width="6" height="6" fill="#ff7835"/><rect x="174" y="150" width="6" height="6" fill="#ff7220"/><rect x="180" y="150" width="6" height="6" fill="#ff6c03"/><rect x="186" y="150" width="6" height="6" fill="#ff6800"/><rect x="192" y="150" width="6" height="6" fill="#ff6300"/><rect x="0" y="156" width="6" height="6" fill="#00eaff"/><rect x="6" y="156" width="6" height="6" fill="#00ebff"/><rect x="12" y="156" width="6" height="6" fill="#00ecff"/><rect x="18" y="156" width="6" height="6" fill="#00edff"/><rect x="24" y="156" width="6" height="6" fill="#00eeff"/><rect x="30" y="156" width="6" height="6" fill="#00efff"/><rect x="36" y="156" width="6" height="6" fill="#00f0ff"/><rect x="42" y="156" width="6" height="6" fill="#00f2ff"/><rect x="48" y="156" width="6" height="6" fill="#00f4ff"/><rect x="54" y="156" width="6" height="6" fill="#00f5ff"/><rect x="60" y="156" width="6" height="6" fill="#2df7ff"/><rect x="66" y="156" width="6" height="6" fill="#74f9ff"/><rect x="72" y="156" width="6" height="6" fill="#9bfbff"/><rect x="78" y="156" width="6" height="6" fill="#bcfcfe"/><rect x="84" y="156" width="6" height="6" fill="#d9fefc"/><rect x="90" y="156" width="6" height="6" fill="#f4fefa"/><rect x="96" y="156" width="6" height="6" fill="#fff2eb"/><rect x="102" y="156" width="6" height="6" fill="#ffded4"/><rect x="108" y="156" width="6" height="6" fill="#ffcec1"/><rect x="114" y="156" width="6" height="6" fill="#ffbfb1"/><rect x="120" y="156" width="6" height="6" fill="#ffb3a2"/><rect x="126" y="156" width="6" height="6" fill="#ffa895"/><rect x="132" y="156" width="6" height="6" fill="#ff9e88"/><rect x="138" y="156" width="6" height="6" fill="#ff957c"/><rect x="144" y="156" width="6" height="6" fill="#ff8d71"/><rect x="150" y="156" width="6" height="6" fill="#ff8565"/><rect x="156" y="156" width="6" height="6" fill="#ff7e5a"/><rect x="162" y="156" width="6" height="6" fill="#ff774f"/><rect x="168" y="156" width="6" height="6" fill="#ff7042"/><rect x="174" y="156" width="6" height="6" fill="#ff6a34"/><rect x="180" y="156" width="6" height="6" fill="#ff6420"/><rect x="186" y="156" width="6" height="6" fill="#ff5e04"/><rect x="192" y="156" width="6" height="6" fill="#ff5900"/><rect x="198" y="156" width="6" height="6" fill="#ff5400"/><rect x="0" y="162" width="6" height="6" fill="#00e1ff"/><rect x="6" y="162" width="6" height="6" fill="#00e1ff"/><rect x="12" y="162" width="6" height="6" fill="#00e2ff"/><rect x="18" y="162" width="6" height="6" fill="#00e3ff"/><rect x="24" y="162" width="6" height="6" fill="#00e4ff"/><rect x="30" y="162" width="6" height="6" fill="#00e4ff"/><rect x="36" y="162" width="6" height="6" fill="#00e5ff"/><rect x="42" y="162" width="6" height="6" fill="#00e6ff"/><rect x="48" y="162" width="6" height="6" fill="#00e8ff"/><rect x="54" y="162" width="6" height="6" fill="#00e9ff"/><rect x="60" y="162" width="6" height="6" fill="#3beaff"/><rect x="66" y="162" width="6" height="6" fill="#77ebff"/><rect x="72" y="162" width="6" height="6" fill="#9dedff"/><rect x="78" y="162" width="6" height="6" fill="#bcefff"/><rect x="84" y="162" width="6" height="6" fill="#d9f0ff"/><rect x="90" y="162" width="6" height="6" fill="#f5f3ff"/><rect x="96" y="162" width="6" height="6" fill="#ffe6ef"/><rect x="102" y="162" width="6" height="6" fill="#ffd3d9"/><rect x="108" y="162" width="6" height="6" fill="#ffc3c7"/><rect x="114" y="162" width="6" height="6" fill="#ffb5b6"/><rect x="120" y="162" width="6" height="6" fill="#ffa9a8"/><rect x="126" y="162" width="6" height="6" fill="#ff9f9b"/><rect x="132" y="162" width="6" height="6" fill="#ff958e"/><rect x="138" y="162" width="6" height="6" fill="#ff8c83"/><rect x="144" y="162" width="6" height="6" fill="#ff8478"/><rect x="150" y="162" width="6" height="6" fill="#ff7c6d"/><rect x="156" y="162" width="6" height="6" fill="#ff7562"/><rect x="162" y="162" width="6" height="6" fill="#ff6e58"/><rect x="168" y="162" width="6" height="6" fill="#ff684d"/><rect x="174" y="162" width="6" height="6" fill="#ff6141"/><rect x="180" y="162" width="6" height="6" fill="#ff5b33"/><rect x="186" y="162" width="6" height="6" fill="#ff5520"/><rect x="192" y="162" width="6" height="6" fill="#ff4f05"/><rect x="198" y="162" width="6" height="6" fill="#ff4a00"/><rect x="204" y="162" width="6" height="6" fill="#ff4400"/><rect x="0" y="168" width="6" height="6" fill="#00d8ff"/><rect x="6" y="168" width="6" height="6" fill="#00d8ff"/><rect x="12" y="168" width="6" height="6" fill="#00d8ff"/><rect x="18" y="168" width="6" height="6" fill="#00d9ff"/><rect x="24" y="168" width="6" height="6" fill="#00d9ff"/><rect x="30" y="168" width="6" height="6" fill="#00daff"/><rect x="36" y="168" width="6" height="6" fill="#00dbff"/><rect x="42" y="168" width="6" height="6" fill="#00dbff"/><rect x="48" y="168" width="6" height="6" fill="#00dcff"/><rect x="54" y="168" width="6" height="6" fill="#00ddff"/><rect x="60" y="168" width="6" height="6" fill="#48ddff"/><rect x="66" y="168" width="6" height="6" fill="#7adeff"/><rect x="72" y="168" width="6" height="6" fill="#9ddfff"/><rect x="78" y="168" width="6" height="6" fill="#bbe0ff"/><rect x="84" y="168" width="6" height="6" fill="#d7e1ff"/><rect x="90" y="168" width="6" height="6" fill="#f1e2ff"/><rect x="96" y="168" width="6" height="6" fill="#ffdaf4"/><rect x="102" y="168" width="6" height="6" fill="#ffc8de"/><rect x="108" y="168" width="6" height="6" fill="#ffb8cc"/><rect x="114" y="168" width="6" height="6" fill="#ffabbc"/><rect x="120" y="168" width="6" height="6" fill="#ffa0ad"/><rect x="126" y="168" width="6" height="6" fill="#ff95a0"/><rect x="132" y="168" width="6" height="6" fill="#ff8c94"/><rect x="138" y="168" width="6" height="6" fill="#ff8389"/><rect x="144" y="168" width="6" height="6" fill="#ff7b7e"/><rect x="150" y="168" width="6" height="6" fill="#ff7374"/><rect x="156" y="168" width="6" height="6" fill="#ff6c6a"/><rect x="162" y="168" width="6" height="6" fill="#ff6560"/><rect x="168" y="168" width="6" height="6" fill="#ff5e55"/><rect x="174" y="168" width="6" height="6" fill="#ff574b"/><rect x="180" y="168" width="6" height="6" fill="#ff513f"/><rect x="186" y="168" width="6" height="6" fill="#ff4a32"/><rect x="192" y="168" width="6" height="6" fill="#ff4320"/><rect x="198" y="168" width="6" height="6" fill="#ff3d05"/><rect x="204" y="168" width="6" height="6" fill="#ff3700"/><rect x="210" y="168" width="6" height="6" fill="#ff3000"/><rect x="0" y="174" width="6" height="6" fill="#00cfff"/><rect x="6" y="174" width="6" height="6" fill="#00cfff"/><rect x="12" y="174" width="6" height="6" fill="#00cfff"/><rect x="18" y="174" width="6" height="6" fill="#00cfff"/><rect x="24" y="174" width="6" height="6" fill="#00cfff"/><rect x="30" y="174" width="6" height="6" fill="#00d0ff"/><rect x="36" y="174" width="6" height="6" fill="#00d0ff"/><rect x="42" y="174" width="6" height="6" fill="#00d0ff"/><rect x="48" y="174" width="6" height="6" fill="#00d0ff"/><rect x="54" y="174" width="6" height="6" fill="#05d1ff"/><rect x="60" y="174" width="6" height="6" fill="#50d1ff"/><rect x="66" y="174" width="6" height="6" fill="#7dd1ff"/><rect x="72" y="174" width="6" height="6" fill="#9ed1ff"/><rect x="78" y="174" width="6" height="6" fill="#bbd2ff"/><rect x="84" y="174" width="6" height="6" fill="#d5d2ff"/><rect x="90" y="174" width="6" height="6" fill="#eed3ff"/><rect x="96" y="174" width="6" height="6" fill="#ffcdf7"/><rect x="102" y="174" width="6" height="6" fill="#ffbce2"/><rect x="108" y="174" width="6" height="6" fill="#ffadd0"/><rect x="114" y="174" width="6" height="6" fill="#ffa0c0"/><rect x="120" y="174" width="6" height="6" fill="#ff95b2"/><rect x="126" y="174" width="6" height="6" fill="#ff8ba5"/><rect x="132" y="174" width="6" height="6" fill="#ff8299"/><rect x="138" y="174" width="6" height="6" fill="#ff798e"/><rect x="144" y="174" width="6" height="6" fill="#ff7184"/><rect x="150" y="174" width="6" height="6" fill="#ff697a"/><rect x="156" y="174" width="6" height="6" fill="#ff6170"/><rect x="162" y="174" width="6" height="6" fill="#ff5a67"/><rect x="168" y="174" width="6" height="6" fill="#ff535d"/><rect x="174" y="174" width="6" height="6" fill="#ff4c53"/><rect x="180" y="174" width="6" height="6" fill="#ff4549"/><rect x="186" y="174" width="6" height="6" fill="#ff3d3e"/><rect x="192" y="174" width="6" height="6" fill="#ff3631"/><rect x="198" y="174" width="6" height="6" fill="#ff2d1f"/><rect x="204" y="174" width="6" height="6" fill="#ff2305"/><rect x="210" y="174" width="6" height="6" fill="#ff1500"/><rect x="216" y="174" width="6" height="6" fill="#ff0902"/><rect x="0" y="180" width="6" height="6" fill="#00c6ff"/><rect x="6" y="180" width="6" height="6" fill="#00c6ff"/><rect x="12" y="180" width="6" height="6" fill="#00c6ff"/><rect x="18" y="180" width="6" height="6" fill="#00c6ff"/><rect x="24" y="180" width="6" height="6" fill="#00c6ff"/><rect x="30" y="180" width="6" height="6" fill="#00c6ff"/><rect x="36" y="180" width="6" height="6" fill="#00c5ff"/><rect x="42" y="180" width="6" height="6" fill="#00c5ff"/><rect x="48" y="180" width="6" height="6" fill="#00c5ff"/><rect x="54" y="180" width="6" height="6" fill="#0ec5ff"/><rect x="60" y="180" width="6" height="6" fill="#57c5ff"/><rect x="66" y="180" width="6" height="6" fill="#80c4ff"/><rect x="72" y="180" width="6" height="6" fill="#9fc4ff"/><rect x="78" y="180" width="6" height="6" fill="#bac4ff"/><rect x="84" y="180" width="6" height="6" fill="#d3c3ff"/><rect x="90" y="180" width="6" height="6" fill="#ebc3ff"/><rect x="96" y="180" width="6" height="6" fill="#febffa"/><rect x="102" y="180" width="6" height="6" fill="#ffb0e7"/><rect x="108" y="180" width="6" height="6" fill="#ffa2d5"/><rect x="114" y="180" width="6" height="6" fill="#ff95c5"/><rect x="120" y="180" width="6" height="6" fill="#ff8ab7"/><rect x="126" y="180" width="6" height="6" fill="#ff80aa"/><rect x="132" y="180" width="6" height="6" fill="#ff779f"/><rect x="138" y="180" width="6" height="6" fill="#ff6e94"/><rect x="144" y="180" width="6" height="6" fill="#ff6689"/><rect x="150" y="180" width="6" height="6" fill="#ff5e80"/><rect x="156" y="180" width="6" height="6" fill="#ff5676"/><rect x="162" y="180" width="6" height="6" fill="#ff4e6d"/><rect x="168" y="180" width="6" height="6" fill="#ff4764"/><rect x="174" y="180" width="6" height="6" fill="#ff3f5b"/><rect x="180" y="180" width="6" height="6" fill="#ff3651"/><rect x="186" y="180" width="6" height="6" fill="#ff2d47"/><rect x="192" y="180" width="6" height="6" fill="#ff213d"/><rect x="198" y="180" width="6" height="6" fill="#ff0e30"/><rect x="204" y="180" width="6" height="6" fill="#ff031f"/><rect x="210" y="180" width="6" height="6" fill="#ff0008"/><rect x="216" y="180" width="6" height="6" fill="#ff0005"/><rect x="0" y="186" width="6" height="6" fill="#00beff"/><rect x="6" y="186" width="6" height="6" fill="#00bdff"/><rect x="12" y="186" width="6" height="6" fill="#00bdff"/><rect x="18" y="186" width="6" height="6" fill="#00bcff"/><rect x="24" y="186" width="6" height="6" fill="#00bcff"/><rect x="30" y="186" width="6" height="6" fill="#00bbff"/><rect x="36" y="186" width="6" height="6" fill="#00bbff"/><rect x="42" y="186" width="6" height="6" fill="#00baff"/><rect x="48" y="186" width="6" height="6" fill="#00baff"/><rect x="54" y="186" width="6" height="6" fill="#15b9ff"/><rect x="60" y="186" width="6" height="6" fill="#5cb8ff"/><rect x="66" y="186" width="6" height="6" fill="#82b8ff"/><rect x="72" y="186" width="6" height="6" fill="#9fb7ff"/><rect x="78" y="186" width="6" height="6" fill="#b9b6ff"/><rect x="84" y="186" width="6" height="6" fill="#d1b5ff"/><rect x="90" y="186" width="6" height="6" fill="#e8b4ff"/><rect x="96" y="186" width="6" height="6" fill="#fcb1fc"/><rect x="102" y="186" width="6" height="6" fill="#ffa3ea"/><rect x="108" y="186" width="6" height="6" fill="#ff95d9"/><rect x="114" y="186" width="6" height="6" fill="#ff89c9"/><rect x="120" y="186" width="6" height="6" fill="#ff7ebb"/><rect x="126" y="186" width="6" height="6" fill="#ff74af"/><rect x="132" y="186" width="6" height="6" fill="#ff6ba3"/><rect x="138" y="186" width="6" height="6" fill="#ff6299"/><rect x="144" y="186" width="6" height="6" fill="#ff598e"/><rect x="150" y="186" width="6" height="6" fill="#ff5185"/><rect x="156" y="186" width="6" height="6" fill="#ff497c"/><rect x="162" y="186" width="6" height="6" fill="#ff4073"/><rect x="168" y="186" width="6" height="6" fill="#ff376a"/><rect x="174" y="186" width="6" height="6" fill="#ff2c61"/><rect x="180" y="186" width="6" height="6" fill="#ff1d58"/><rect x="186" y="186" width="6" height="6" fill="#ff0c4f"/><rect x="192" y="186" width="6" height="6" fill="#ff0146"/><rect x="198" y="186" width="6" height="6" fill="#ff003c"/><rect x="204" y="186" width="6" height="6" fill="#ff0030"/><rect x="210" y="186" width="6" height="6" fill="#ff001f"/><rect x="216" y="186" width="6" height="6" fill="#ff000b"/><rect x="0" y="192" width="6" height="6" fill="#00b5ff"/><rect x="6" y="192" width="6" height="6" fill="#00b4ff"/><rect x="12" y="192" width="6" height="6" fill="#00b4ff"/><rect x="18" y="192" width="6" height="6" fill="#00b3ff"/><rect x="24" y="192" width="6" height="6" fill="#00b2ff"/><rect x="30" y="192" width="6" height="6" fill="#00b1ff"/><rect x="36" y="192" width="6" height="6" fill="#00b0ff"/><rect x="42" y="192" width="6" height="6" fill="#00b0ff"/><rect x="48" y="192" width="6" height="6" fill="#00afff"/><rect x="54" y="192" width="6" height="6" fill="#22adff"/><rect x="60" y="192" width="6" height="6" fill="#61acff"/><rect x="66" y="192" width="6" height="6" fill="#84abff"/><rect x="72" y="192" width="6" height="6" fill="#a0aaff"/><rect x="78" y="192" width="6" height="6" fill="#b9a8ff"/><rect x="84" y="192" width="6" height="6" fill="#d0a6ff"/><rect x="90" y="192" width="6" height="6" fill="#e6a4ff"/><rect x="96" y="192" width="6" height="6" fill="#faa2fe"/><rect x="102" y="192" width="6" height="6" fill="#ff95ee"/><rect x="108" y="192" width="6" height="6" fill="#ff88dd"/><rect x="114" y="192" width="6" height="6" fill="#ff7ccd"/><rect x="120" y="192" width="6" height="6" fill="#ff71c0"/><rect x="126" y="192" width="6" height="6" fill="#ff67b3"/><rect x="132" y="192" width="6" height="6" fill="#ff5ea8"/><rect x="138" y="192" width="6" height="6" fill="#ff549d"/><rect x="144" y="192" width="6" height="6" fill="#ff4b93"/><rect x="150" y="192" width="6" height="6" fill="#ff418a"/><rect x="156" y="192" width="6" height="6" fill="#ff3781"/><rect x="162" y="192" width="6" height="6" fill="#ff2c78"/><rect x="168" y="192" width="6" height="6" fill="#ff1b70"/><rect x="174" y="192" width="6" height="6" fill="#ff0a67"/><rect x="180" y="192" width="6" height="6" fill="#ff005f"/><rect x="186" y="192" width="6" height="6" fill="#ff0056"/><rect x="192" y="192" width="6" height="6" fill="#ff004e"/><rect x="198" y="192" width="6" height="6" fill="#ff0045"/><rect x="204" y="192" width="6" height="6" fill="#ff003b"/><rect x="210" y="192" width="6" height="6" fill="#ff002f"/><rect x="216" y="192" width="6" height="6" fill="#ff001f"/><rect x="0" y="198" width="6" height="6" fill="#00acff"/><rect x="6" y="198" width="6" height="6" fill="#00abff"/><rect x="12" y="198" width="6" height="6" fill="#00aaff"/><rect x="18" y="198" width="6" height="6" fill="#00a9ff"/><rect x="24" y="198" width="6" height="6" fill="#00a8ff"/><rect x="30" y="198" width="6" height="6" fill="#00a7ff"/><rect x="36" y="198" width="6" height="6" fill="#00a6ff"/><rect x="42" y="198" width="6" height="6" fill="#00a5ff"/><rect x="48" y="198" width="6" height="6" fill="#00a3ff"/><rect x="54" y="198" width="6" height="6" fill="#2aa2ff"/><rect x="60" y="198" width="6" height="6" fill="#65a0ff"/><rect x="66" y="198" width="6" height="6" fill="#869eff"/><rect x="72" y="198" width="6" height="6" fill="#a09cff"/><rect x="78" y="198" width="6" height="6" fill="#b89aff"/><rect x="84" y="198" width="6" height="6" fill="#cf97ff"/><rect x="90" y="198" width="6" height="6" fill="#e495ff"/><rect x="96" y="198" width="6" height="6" fill="#f892ff"/><rect x="102" y="198" width="6" height="6" fill="#ff87f2"/><rect x="108" y="198" width="6" height="6" fill="#ff7ae0"/><rect x="114" y="198" width="6" height="6" fill="#ff6ed1"/><rect x="120" y="198" width="6" height="6" fill="#ff63c4"/><rect x="126" y="198" width="6" height="6" fill="#ff58b7"/><rect x="132" y="198" width="6" height="6" fill="#ff4eac"/><rect x="138" y="198" width="6" height="6" fill="#ff43a2"/><rect x="144" y="198" width="6" height="6" fill="#ff3898"/><rect x="150" y="198" width="6" height="6" fill="#ff2b8f"/><rect x="156" y="198" width="6" height="6" fill="#ff1886"/><rect x="162" y="198" width="6" height="6" fill="#ff067d"/><rect x="168" y="198" width="6" height="6" fill="#ff0075"/><rect x="174" y="198" width="6" height="6" fill="#ff006d"/><rect x="180" y="198" width="6" height="6" fill="#ff0065"/><rect x="186" y="198" width="6" height="6" fill="#ff005d"/><rect x="192" y="198" width="6" height="6" fill="#ff0055"/><rect x="198" y="198" width="6" height="6" fill="#ff004c"/><rect x="204" y="198" width="6" height="6" fill="#ff0043"/><rect x="210" y="198" width="6" height="6" fill="#ff003a"/><rect x="216" y="198" width="6" height="6" fill="#ff002e"/><rect x="0" y="204" width="6" height="6" fill="#00a4ff"/><rect x="6" y="204" width="6" height="6" fill="#00a2ff"/><rect x="12" y="204" width="6" height="6" fill="#00a1ff"/><rect x="18" y="204" width="6" height="6" fill="#00a0ff"/><rect x="24" y="204" width="6" height="6" fill="#009fff"/><rect x="30" y="204" width="6" height="6" fill="#009dff"/><rect x="36" y="204" width="6" height="6" fill="#009bff"/><rect x="42" y="204" width="6" height="6" fill="#009aff"/><rect x="48" y="204" width="6" height="6" fill="#0098ff"/><rect x="54" y="204" width="6" height="6" fill="#3996ff"/><rect x="60" y="204" width="6" height="6" fill="#6993ff"/><rect x="66" y="204" width="6" height="6" fill="#8791ff"/><rect x="72" y="204" width="6" height="6" fill="#a18eff"/><rect x="78" y="204" width="6" height="6" fill="#b88bff"/><rect x="84" y="204" width="6" height="6" fill="#cd88ff"/><rect x="90" y="204" width="6" height="6" fill="#e284ff"/><rect x="96" y="204" width="6" height="6" fill="#f680ff"/><rect x="102" y="204" width="6" height="6" fill="#ff77f5"/><rect x="108" y="204" width="6" height="6" fill="#ff6ae4"/><rect x="114" y="204" width="6" height="6" fill="#ff5dd5"/><rect x="120" y="204" width="6" height="6" fill="#ff51c7"/><rect x="126" y="204" width="6" height="6" fill="#ff46bb"/><rect x="132" y="204" width="6" height="6" fill="#ff39b0"/><rect x="138" y="204" width="6" height="6" fill="#ff2aa6"/><rect x="144" y="204" width="6" height="6" fill="#ff149c"/><rect x="150" y="204" width="6" height="6" fill="#ff0493"/><rect x="156" y="204" width="6" height="6" fill="#ff008a"/><rect x="162" y="204" width="6" height="6" fill="#ff0082"/><rect x="168" y="204" width="6" height="6" fill="#ff007a"/><rect x="174" y="204" width="6" height="6" fill="#ff0072"/><rect x="180" y="204" width="6" height="6" fill="#ff006a"/><rect x="186" y="204" width="6" height="6" fill="#ff0063"/><rect x="192" y="204" width="6" height="6" fill="#ff005b"/><rect x="198" y="204" width="6" height="6" fill="#ff0053"/><rect x="204" y="204" width="6" height="6" fill="#ff004b"/><rect x="210" y="204" width="6" height="6" fill="#ff0042"/><rect x="216" y="204" width="6" height="6" fill="#ff0039"/><rect x="0" y="210" width="6" height="6" fill="#009bff"/><rect x="6" y="210" width="6" height="6" fill="#0099ff"/><rect x="12" y="210" width="6" height="6" fill="#0098ff"/><rect x="18" y="210" width="6" height="6" fill="#0096ff"/><rect x="24" y="210" width="6" height="6" fill="#0094ff"/><rect x="30" y="210" width="6" height="6" fill="#0093ff"/><rect x="36" y="210" width="6" height="6" fill="#0091ff"/><rect x="42" y="210" width="6" height="6" fill="#008eff"/><rect x="48" y="210" width="6" height="6" fill="#008cff"/><rect x="54" y="210" width="6" height="6" fill="#4289ff"/><rect x="60" y="210" width="6" height="6" fill="#6c86ff"/><rect x="66" y="210" width="6" height="6" fill="#8983ff"/><rect x="72" y="210" width="6" height="6" fill="#a180ff"/><rect x="78" y="210" width="6" height="6" fill="#b77cff"/><rect x="84" y="210" width="6" height="6" fill="#cc78ff"/><rect x="90" y="210" width="6" height="6" fill="#e073ff"/><rect x="96" y="210" width="6" height="6" fill="#f36dff"/><rect x="102" y="210" width="6" height="6" fill="#ff64f8"/><rect x="108" y="210" width="6" height="6" fill="#ff56e7"/><rect x="114" y="210" width="6" height="6" fill="#ff49d8"/><rect x="120" y="210" width="6" height="6" fill="#ff3acb"/><rect x="126" y="210" width="6" height="6" fill="#ff29bf"/><rect x="132" y="210" width="6" height="6" fill="#ff11b4"/><rect x="138" y="210" width="6" height="6" fill="#ff02aa"/><rect x="144" y="210" width="6" height="6" fill="#ff00a0"/><rect x="150" y="210" width="6" height="6" fill="#ff0097"/><rect x="156" y="210" width="6" height="6" fill="#ff008f"/><rect x="162" y="210" width="6" height="6" fill="#ff0086"/><rect x="168" y="210" width="6" height="6" fill="#ff007f"/><rect x="174" y="210" width="6" height="6" fill="#ff0077"/><rect x="180" y="210" width="6" height="6" fill="#ff006f"/><rect x="186" y="210" width="6" height="6" fill="#ff0068"/><rect x="192" y="210" width="6" height="6" fill="#ff0060"/><rect x="198" y="210" width="6" height="6" fill="#ff0059"/><rect x="204" y="210" width="6" height="6" fill="#ff0051"/><rect x="210" y="210" width="6" height="6" fill="#ff0049"/><rect x="216" y="210" width="6" height="6" fill="#ff0041"/><rect x="0" y="216" width="6" height="6" fill="#0092ff"/><rect x="6" y="216" width="6" height="6" fill="#0090ff"/><rect x="12" y="216" width="6" height="6" fill="#008eff"/><rect x="18" y="216" width="6" height="6" fill="#008cff"/><rect x="24" y="216" width="6" height="6" fill="#008aff"/><rect x="30" y="216" width="6" height="6" fill="#0088ff"/><rect x="36" y="216" width="6" height="6" fill="#0085ff"/><rect x="42" y="216" width="6" height="6" fill="#0083ff"/><rect x="48" y="216" width="6" height="6" fill="#0980ff"/><rect x="54" y="216" width="6" height="6" fill="#497cff"/><rect x="60" y="216" width="6" height="6" fill="#6f79ff"/><rect x="66" y="216" width="6" height="6" fill="#8a75ff"/><rect x="72" y="216" width="6" height="6" fill="#a270ff"/><rect x="78" y="216" width="6" height="6" fill="#b76cff"/><rect x="84" y="216" width="6" height="6" fill="#cb66ff"/><rect x="90" y="216" width="6" height="6" fill="#de5fff"/><rect x="96" y="216" width="6" height="6" fill="#f157ff"/><rect x="102" y="216" width="6" height="6" fill="#fe4cfa"/><rect x="108" y="216" width="6" height="6" fill="#ff3cea"/><rect x="114" y="216" width="6" height="6" fill="#ff26dc"/><rect x="120" y="216" width="6" height="6" fill="#ff0ece"/><rect x="126" y="216" width="6" height="6" fill="#ff01c3"/><rect x="132" y="216" width="6" height="6" fill="#ff00b8"/><rect x="138" y="216" width="6" height="6" fill="#ff00ad"/><rect x="144" y="216" width="6" height="6" fill="#ff00a4"/><rect x="150" y="216" width="6" height="6" fill="#ff009b"/><rect x="156" y="216" width="6" height="6" fill="#ff0093"/><rect x="162" y="216" width="6" height="6" fill="#ff008b"/><rect x="168" y="216" width="6" height="6" fill="#ff0083"/><rect x="174" y="216" width="6" height="6" fill="#ff007b"/><rect x="180" y="216" width="6" height="6" fill="#ff0074"/><rect x="186" y="216" width="6" height="6" fill="#ff006d"/><rect x="192" y="216" width="6" height="6" fill="#ff0066"/><rect x="198" y="216" width="6" height="6" fill="#ff005e"/><rect x="204" y="216" width="6" height="6" fill="#ff0057"/><rect x="210" y="216" width="6" height="6" fill="#ff0050"/><rect x="216" y="216" width="6" height="6" fill="#ff0048"/><rect x="0" y="222" width="6" height="6" fill="#0089ff"/><rect x="6" y="222" width="6" height="6" fill="#0087ff"/><rect x="12" y="222" width="6" height="6" fill="#0084ff"/><rect x="18" y="222" width="6" height="6" fill="#0082ff"/><rect x="24" y="222" width="6" height="6" fill="#007fff"/><rect x="30" y="222" width="6" height="6" fill="#007dff"/><rect x="36" y="222" width="6" height="6" fill="#007aff"/><rect x="42" y="222" width="6" height="6" fill="#0076ff"/><rect x="48" y="222" width="6" height="6" fill="#0e73ff"/><rect x="54" y="222" width="6" height="6" fill="#4f6fff"/><rect x="60" y="222" width="6" height="6" fill="#716aff"/><rect x="66" y="222" width="6" height="6" fill="#8b65ff"/><rect x="72" y="222" width="6" height="6" fill="#a25fff"/><rect x="78" y="222" width="6" height="6" fill="#b759ff"/><rect x="84" y="222" width="6" height="6" fill="#ca51ff"/><rect x="90" y="222" width="6" height="6" fill="#dc47ff"/><rect x="96" y="222" width="6" height="6" fill="#ee3aff"/><rect x="102" y="222" width="6" height="6" fill="#fd24fc"/><rect x="108" y="222" width="6" height="6" fill="#ff0ced"/><rect x="114" y="222" width="6" height="6" fill="#ff00df"/><rect x="120" y="222" width="6" height="6" fill="#ff00d2"/><rect x="126" y="222" width="6" height="6" fill="#ff00c6"/><rect x="132" y="222" width="6" height="6" fill="#ff00bb"/><rect x="138" y="222" width="6" height="6" fill="#ff00b1"/><rect x="144" y="222" width="6" height="6" fill="#ff00a8"/><rect x="150" y="222" width="6" height="6" fill="#ff009f"/><rect x="156" y="222" width="6" height="6" fill="#ff0097"/><rect x="162" y="222" width="6" height="6" fill="#ff008f"/><rect x="168" y="222" width="6" height="6" fill="#ff0087"/><rect x="174" y="222" width="6" height="6" fill="#ff0080"/><rect x="180" y="222" width="6" height="6" fill="#ff0078"/><rect x="186" y="222" width="6" height="6" fill="#ff0071"/><rect x="192" y="222" width="6" height="6" fill="#ff006a"/><rect x="198" y="222" width="6" height="6" fill="#ff0064"/><rect x="204" y="222" width="6" height="6" fill="#ff005d"/><rect x="210" y="222" width="6" height="6" fill="#ff0056"/><rect x="216" y="222" width="6" height="6" fill="#ff004e"/><rect x="0" y="228" width="6" height="6" fill="#007fff"/><rect x="6" y="228" width="6" height="6" fill="#007dff"/><rect x="12" y="228" width="6" height="6" fill="#007aff"/><rect x="18" y="228" width="6" height="6" fill="#0077ff"/><rect x="24" y="228" width="6" height="6" fill="#0074ff"/><rect x="30" y="228" width="6" height="6" fill="#0071ff"/><rect x="36" y="228" width="6" height="6" fill="#006dff"/><rect x="42" y="228" width="6" height="6" fill="#0069ff"/><rect x="48" y="228" width="6" height="6" fill="#1865ff"/><rect x="54" y="228" width="6" height="6" fill="#545fff"/><rect x="60" y="228" width="6" height="6" fill="#745aff"/><rect x="66" y="228" width="6" height="6" fill="#8d53ff"/><rect x="72" y="228" width="6" height="6" fill="#a24bff"/><rect x="78" y="228" width="6" height="6" fill="#b641ff"/><rect x="84" y="228" width="6" height="6" fill="#c934ff"/><rect x="90" y="228" width="6" height="6" fill="#db1dff"/><rect x="96" y="228" width="6" height="6" fill="#ec07ff"/><rect x="102" y="228" width="6" height="6" fill="#fc00fe"/><rect x="108" y="228" width="6" height="6" fill="#ff00f0"/><rect x="114" y="228" width="6" height="6" fill="#ff00e2"/><rect x="120" y="228" width="6" height="6" fill="#ff00d5"/><rect x="126" y="228" width="6" height="6" fill="#ff00c9"/><rect x="132" y="228" width="6" height="6" fill="#ff00be"/><rect x="138" y="228" width="6" height="6" fill="#ff00b5"/><rect x="144" y="228" width="6" height="6" fill="#ff00ab"/><rect x="150" y="228" width="6" height="6" fill="#ff00a3"/><rect x="156" y="228" width="6" height="6" fill="#ff009a"/><rect x="162" y="228" width="6" height="6" fill="#ff0092"/><rect x="168" y="228" width="6" height="6" fill="#ff008b"/><rect x="174" y="228" width="6" height="6" fill="#ff0084"/><rect x="180" y="228" width="6" height="6" fill="#ff007d"/><rect x="186" y="228" width="6" height="6" fill="#ff0076"/><rect x="192" y="228" width="6" height="6" fill="#ff006f"/><rect x="198" y="228" width="6" height="6" fill="#ff0068"/><rect x="204" y="228" width="6" height="6" fill="#ff0062"/><rect x="210" y="228" width="6" height="6" fill="#ff005b"/><rect x="216" y="228" width="6" height="6" fill="#ff0054"/><rect x="0" y="234" width="6" height="6" fill="#0075ff"/><rect x="6" y="234" width="6" height="6" fill="#0073ff"/><rect x="12" y="234" width="6" height="6" fill="#006fff"/><rect x="18" y="234" width="6" height="6" fill="#006cff"/><rect x="24" y="234" width="6" height="6" fill="#0068ff"/><rect x="30" y="234" width="6" height="6" fill="#0064ff"/><rect x="36" y="234" width="6" height="6" fill="#0060ff"/><rect x="42" y="234" width="6" height="6" fill="#005aff"/><rect x="48" y="234" width="6" height="6" fill="#2155ff"/><rect x="54" y="234" width="6" height="6" fill="#584eff"/><rect x="60" y="234" width="6" height="6" fill="#7646ff"/><rect x="66" y="234" width="6" height="6" fill="#8e3cff"/><rect x="72" y="234" width="6" height="6" fill="#a32dff"/><rect x="78" y="234" width="6" height="6" fill="#b615ff"/><rect x="84" y="234" width="6" height="6" fill="#c804ff"/><rect x="90" y="234" width="6" height="6" fill="#d900ff"/><rect x="96" y="234" width="6" height="6" fill="#ea00ff"/><rect x="102" y="234" width="6" height="6" fill="#fb00fe"/><rect x="108" y="234" width="6" height="6" fill="#ff00f3"/><rect x="114" y="234" width="6" height="6" fill="#ff00e5"/><rect x="120" y="234" width="6" height="6" fill="#ff00d8"/><rect x="126" y="234" width="6" height="6" fill="#ff00cc"/><rect x="132" y="234" width="6" height="6" fill="#ff00c2"/><rect x="138" y="234" width="6" height="6" fill="#ff00b8"/><rect x="144" y="234" width="6" height="6" fill="#ff00af"/><rect x="150" y="234" width="6" height="6" fill="#ff00a6"/><rect x="156" y="234" width="6" height="6" fill="#ff009e"/><rect x="162" y="234" width="6" height="6" fill="#ff0096"/><rect x="168" y="234" width="6" height="6" fill="#ff008f"/><rect x="174" y="234" width="6" height="6" fill="#ff0088"/><rect x="180" y="234" width="6" height="6" fill="#ff0081"/><rect x="186" y="234" width="6" height="6" fill="#ff007a"/><rect x="192" y="234" width="6" height="6" fill="#ff0073"/><rect x="198" y="234" width="6" height="6" fill="#ff006d"/><rect x="204" y="234" width="6" height="6" fill="#ff0066"/><rect x="210" y="234" width="6" height="6" fill="#ff0060"/><rect x="216" y="234" width="6" height="6" fill="#ff0059"/><rect x="0" y="240" width="6" height="6" fill="#006bff"/><rect x="6" y="240" width="6" height="6" fill="#0068ff"/><rect x="12" y="240" width="6" height="6" fill="#0064ff"/><rect x="18" y="240" width="6" height="6" fill="#0060ff"/><rect x="24" y="240" width="6" height="6" fill="#005bff"/><rect x="30" y="240" width="6" height="6" fill="#0056ff"/><rect x="36" y="240" width="6" height="6" fill="#0050ff"/><rect x="42" y="240" width="6" height="6" fill="#0049ff"/><rect x="48" y="240" width="6" height="6" fill="#2b41ff"/><rect x="54" y="240" width="6" height="6" fill="#5c37ff"/><rect x="60" y="240" width="6" height="6" fill="#7827ff"/><rect x="66" y="240" width="6" height="6" fill="#8f11ff"/><rect x="72" y="240" width="6" height="6" fill="#a302ff"/><rect x="78" y="240" width="6" height="6" fill="#b600ff"/><rect x="84" y="240" width="6" height="6" fill="#c700ff"/><rect x="90" y="240" width="6" height="6" fill="#d800ff"/><rect x="96" y="240" width="6" height="6" fill="#e900ff"/><rect x="102" y="240" width="6" height="6" fill="#f900ff"/><rect x="108" y="240" width="6" height="6" fill="#ff00f6"/><rect x="114" y="240" width="6" height="6" fill="#ff00e8"/><rect x="120" y="240" width="6" height="6" fill="#ff00db"/><rect x="126" y="240" width="6" height="6" fill="#ff00cf"/><rect x="132" y="240" width="6" height="6" fill="#ff00c5"/><rect x="138" y="240" width="6" height="6" fill="#ff00bb"/><rect x="144" y="240" width="6" height="6" fill="#ff00b2"/><rect x="150" y="240" width="6" height="6" fill="#ff00a9"/><rect x="156" y="240" width="6" height="6" fill="#ff00a1"/><rect x="162" y="240" width="6" height="6" fill="#ff009a"/><rect x="168" y="240" width="6" height="6" fill="#ff0092"/><rect x="174" y="240" width="6" height="6" fill="#ff008b"/><rect x="180" y="240" width="6" height="6" fill="#ff0084"/><rect x="186" y="240" width="6" height="6" fill="#ff007e"/><rect x="192" y="240" width="6" height="6" fill="#ff0077"/><rect x="198" y="240" width="6" height="6" fill="#ff0071"/><rect x="204" y="240" width="6" height="6" fill="#ff006b"/><rect x="210" y="240" width="6" height="6" fill="#ff0064"/><rect x="216" y="240" width="6" height="6" fill="#ff005e"/><rect x="0" y="246" width="6" height="6" fill="#0060ff"/><rect x="6" y="246" width="6" height="6" fill="#005bff"/><rect x="12" y="246" width="6" height="6" fill="#0057ff"/><rect x="18" y="246" width="6" height="6" fill="#0052ff"/><rect x="24" y="246" width="6" height="6" fill="#004cff"/><rect x="30" y="246" width="6" height="6" fill="#0045ff"/><rect x="36" y="246" width="6" height="6" fill="#003dff"/><rect x="42" y="246" width="6" height="6" fill="#0032ff"/><rect x="48" y="246" width="6" height="6" fill="#3721ff"/><rect x="54" y="246" width="6" height="6" fill="#5f0cff"/><rect x="60" y="246" width="6" height="6" fill="#7a00ff"/><rect x="66" y="246" width="6" height="6" fill="#9000ff"/><rect x="72" y="246" width="6" height="6" fill="#a300ff"/><rect x="78" y="246" width="6" height="6" fill="#b500ff"/><rect x="84" y="246" width="6" height="6" fill="#c600ff"/><rect x="90" y="246" width="6" height="6" fill="#d700ff"/><rect x="96" y="246" width="6" height="6" fill="#e700ff"/><rect x="102" y="246" width="6" height="6" fill="#f600ff"/><rect x="108" y="246" width="6" height="6" fill="#ff00f8"/><rect x="114" y="246" width="6" height="6" fill="#ff00ea"/><rect x="120" y="246" width="6" height="6" fill="#ff00de"/><rect x="126" y="246" width="6" height="6" fill="#ff00d2"/><rect x="132" y="246" width="6" height="6" fill="#ff00c8"/><rect x="138" y="246" width="6" height="6" fill="#ff00be"/><rect x="144" y="246" width="6" height="6" fill="#ff00b5"/><rect x="150" y="246" width="6" height="6" fill="#ff00ad"/><rect x="156" y="246" width="6" height="6" fill="#ff00a5"/><rect x="162" y="246" width="6" height="6" fill="#ff009d"/><rect x="168" y="246" width="6" height="6" fill="#ff0096"/><rect x="174" y="246" width="6" height="6" fill="#ff008f"/><rect x="180" y="246" width="6" height="6" fill="#ff0088"/><rect x="186" y="246" width="6" height="6" fill="#ff0082"/><rect x="192" y="246" width="6" height="6" fill="#ff007b"/><rect x="198" y="246" width="6" height="6" fill="#ff0075"/><rect x="204" y="246" width="6" height="6" fill="#ff006f"/><rect x="210" y="246" width="6" height="6" fill="#ff0069"/><rect x="216" y="246" width="6" height="6" fill="#ff0063"/><rect x="0" y="252" width="6" height="6" fill="#0055ff"/><rect x="6" y="252" width="6" height="6" fill="#0050ff"/><rect x="12" y="252" width="6" height="6" fill="#004bff"/><rect x="18" y="252" width="6" height="6" fill="#0044ff"/><rect x="24" y="252" width="6" height="6" fill="#003dff"/><rect x="30" y="252" width="6" height="6" fill="#0033ff"/><rect x="36" y="252" width="6" height="6" fill="#0026ff"/><rect x="42" y="252" width="6" height="6" fill="#000cff"/><rect x="48" y="252" width="6" height="6" fill="#3d00ff"/><rect x="54" y="252" width="6" height="6" fill="#6200ff"/><rect x="60" y="252" width="6" height="6" fill="#7b00ff"/><rect x="66" y="252" width="6" height="6" fill="#9000ff"/><rect x="72" y="252" width="6" height="6" fill="#a300ff"/><rect x="78" y="252" width="6" height="6" fill="#b500ff"/><rect x="84" y="252" width="6" height="6" fill="#c600ff"/><rect x="90" y="252" width="6" height="6" fill="#d600ff"/><rect x="96" y="252" width="6" height="6" fill="#e500ff"/><rect x="102" y="252" width="6" height="6" fill="#f500ff"/><rect x="108" y="252" width="6" height="6" fill="#ff00fa"/><rect x="114" y="252" width="6" height="6" fill="#ff00ec"/><rect x="120" y="252" width="6" height="6" fill="#ff00e0"/><rect x="126" y="252" width="6" height="6" fill="#ff00d5"/><rect x="132" y="252" width="6" height="6" fill="#ff00ca"/><rect x="138" y="252" width="6" height="6" fill="#ff00c1"/><rect x="144" y="252" width="6" height="6" fill="#ff00b8"/><rect x="150" y="252" width="6" height="6" fill="#ff00af"/><rect x="156" y="252" width="6" height="6" fill="#ff00a7"/><rect x="162" y="252" width="6" height="6" fill="#ff00a0"/><rect x="168" y="252" width="6" height="6" fill="#ff0098"/><rect x="174" y="252" width="6" height="6" fill="#ff0092"/><rect x="180" y="252" width="6" height="6" fill="#ff008b"/><rect x="186" y="252" width="6" height="6" fill="#ff0084"/><rect x="192" y="252" width="6" height="6" fill="#ff007e"/><rect x="198" y="252" width="6" height="6" fill="#ff0078"/><rect x="204" y="252" width="6" height="6" fill="#ff0072"/><rect x="210" y="252" width="6" height="6" fill="#ff006c"/><rect x="216" y="252" width="6" height="6" fill="#ff0066"/></g></g>
</svg>
<canvas id="cie" class="a" width="251" height="256" style="left:0;top:0"></canvas>
<svg class="a" style="left:0;top:0" width="251" height="256"><defs><radialGradient id="glow" cx="103" cy="163" r="95" gradientUnits="userSpaceOnUse"><stop offset="0" stop-color="#fff" stop-opacity="0.15"/><stop offset="0.5" stop-color="#fff" stop-opacity="0.0825"/><stop offset="1" stop-color="#fff" stop-opacity="0"/></radialGradient></defs><rect width="251" height="256" fill="url(#glow)" clip-path="url(#lc)"/></svg>
<svg class="a" style="left:0;top:0" width="251" height="256" font-family="Liberation Sans">
<g fill="#000" fill-opacity="0.12"><rect x="28" y="0" width="1" height="256"/><rect x="57" y="0" width="1" height="256"/><rect x="85" y="0" width="1" height="256"/><rect x="113" y="0" width="1" height="256"/><rect x="142" y="0" width="1" height="256"/><rect x="170" y="0" width="1" height="256"/><rect x="198" y="0" width="1" height="256"/><rect x="227" y="0" width="1" height="256"/><rect x="0" y="227" width="251" height="1"/><rect x="0" y="198" width="251" height="1"/><rect x="0" y="170" width="251" height="1"/><rect x="0" y="142" width="251" height="1"/><rect x="0" y="114" width="251" height="1"/><rect x="0" y="85" width="251" height="1"/><rect x="0" y="57" width="251" height="1"/><rect x="0" y="28" width="251" height="1"/></g>
<rect x="0" y="0" width="251" height="1" fill="#c4c4c4"/>
<rect x="0" y="0" width="1" height="256" fill="#555"/>
<rect x="0" y="255" width="251" height="1" fill="#555"/>
<polygon points="88.5,84.5 177,160.4 45.8,231.6" fill="none" stroke="#f0a030" stroke-width="1"/>
<polygon points="89.4,84.8 191.4,177.6 43,234" fill="none" stroke="#000" stroke-width="1" shape-rendering="crispEdges"/>
<g font-size="9" fill="#1a1a1a">
<text x="3" y="8.5">y</text>
<text x="2.8" y="31.2">0.8</text><text x="2.8" y="88.2">0.6</text><text x="2.8" y="145.2">0.4</text><text x="2.8" y="201.2">0.2</text>
<text x="3" y="253">0</text>
<g text-anchor="middle"><text x="57.5" y="253">0.2</text><text x="113.5" y="253">0.4</text><text x="170.5" y="253">0.6</text><text x="227.5" y="253">0.8</text><text x="251" y="253">x</text></g>
</g>
<text x="167.5" y="61" font-size="13.4" font-weight="bold" fill="#000">Monitor</text>
<text x="167.5" y="76.8" font-size="13.4" font-weight="bold" fill="#f2a634">sRGB</text>
</svg>
</div>

<!-- bar chart -->
<div class="a" style="left:321px;top:112px;width:256px;height:256px;background:linear-gradient(to bottom,#e04a14 0px,#ec6c14 28px,#eca414 58px,#f0c814 78px,#ece614 97px,#d0e614 128px,#aed214 153px,#8cb814 178px,#6aa612 203px,#4a9410 228px,#3a8c10 256px)">
<svg class="a" style="left:0;top:0" width="256" height="256" font-family="Liberation Sans">
<g fill="#000" fill-opacity="0.14"><rect x="1" y="51" width="254" height="1"/><rect x="1" y="102" width="254" height="1"/><rect x="1" y="152" width="254" height="1"/><rect x="1" y="203" width="254" height="1"/></g>
<g font-size="8" fill="#000" fill-opacity="0.6"><text x="2" y="8">10 d E 94</text><text x="2" y="54">8 d E 94</text><text x="2" y="105">6 d E 94</text><text x="2" y="155">4 d E 94</text><text x="2" y="206">2 d E 94</text><text x="2.4" y="8">10 d E 94</text><text x="2.4" y="54">8 d E 94</text><text x="2.4" y="105">6 d E 94</text><text x="2.4" y="155">4 d E 94</text><text x="2.4" y="206">2 d E 94</text></g>
<rect x="45" y="246" width="10" height="9" fill="#000"/><rect x="46" y="247" width="8" height="8" fill="#333333"/><rect x="57" y="246" width="10" height="9" fill="#000"/><rect x="58" y="247" width="8" height="8" fill="#555555"/><rect x="69" y="246" width="10" height="9" fill="#000"/><rect x="70" y="247" width="8" height="8" fill="#909090"/><rect x="81" y="246" width="10" height="9" fill="#000"/><rect x="82" y="247" width="8" height="8" fill="#d0d0d0"/><rect x="105" y="223" width="10" height="32" fill="#000"/><rect x="106" y="224" width="8" height="31" fill="#ff0000"/><rect x="117" y="216" width="10" height="39" fill="#000"/><rect x="118" y="217" width="8" height="38" fill="#00ff00"/><rect x="129" y="221" width="10" height="34" fill="#000"/><rect x="130" y="222" width="8" height="33" fill="#0000ff"/><rect x="141" y="205" width="10" height="50" fill="#000"/><rect x="142" y="206" width="8" height="49" fill="#00ffff"/><rect x="153" y="221" width="10" height="34" fill="#000"/><rect x="154" y="222" width="8" height="33" fill="#ff00ff"/><rect x="165" y="210" width="10" height="45" fill="#000"/><rect x="166" y="211" width="8" height="44" fill="#ffff00"/><rect x="177" y="244" width="10" height="11" fill="#000"/><rect x="178" y="245" width="8" height="10" fill="#b05050"/><rect x="189" y="239" width="10" height="16" fill="#000"/><rect x="190" y="240" width="8" height="15" fill="#60a060"/><rect x="201" y="228" width="10" height="27" fill="#000"/><rect x="202" y="229" width="8" height="26" fill="#5050a0"/><rect x="213" y="244" width="10" height="11" fill="#000"/><rect x="214" y="245" width="8" height="10" fill="#50a0b0"/><rect x="225" y="228" width="10" height="27" fill="#000"/><rect x="226" y="229" width="8" height="26" fill="#a050a0"/><rect x="237" y="249" width="10" height="6" fill="#000"/><rect x="238" y="250" width="8" height="5" fill="#b0b070"/>
<rect x="0" y="0" width="256" height="1" fill="#000"/><rect x="0" y="0" width="1" height="256" fill="#000"/><rect x="255" y="0" width="1" height="256" fill="#000"/><rect x="0" y="255" width="256" height="1" fill="#000"/>
</svg>
</div>

<!-- table -->
<div class="a t12" style="left:108px;top:379px">Target</div>
<div class="a t12" style="left:173px;top:379px">Current</div>
<div class="a t12" style="left:237px;top:379px">Deviation</div>
<div class="a t12" style="left:45px;top:394px">Gamma</div>
<div class="a t12" style="left:108px;top:394px">2.2</div>
<div class="a t12 g" style="left:173px;top:394px">2.2</div>
<div class="a t12 g" style="left:237px;top:394px">1%</div>
<div class="a t12" style="left:45px;top:409px">Kelvin</div>
<div class="a t12" style="left:108px;top:409px">6500</div>
<div class="a t12 g" style="left:173px;top:409px">6490</div>
<div class="a t12 g" style="left:237px;top:409px">0%</div>
<div class="a t12" style="left:45px;top:424px">cd/m2</div>
<div class="a t12" style="left:108px;top:424px">160</div>
<div class="a t12 o" style="left:173px;top:424px">73</div>
<div class="a t12 o" style="left:237px;top:424px">54%</div>

<div class="a t12" style="left:321px;top:379px;letter-spacing:0.05px">Delta E Average</div>
<div class="a t12 g" style="left:435px;top:379px">0.9</div>
<div class="a t12" style="left:321px;top:394px;letter-spacing:0.15px">Delta E Maximum</div>
<div class="a t12 g" style="left:435px;top:394px">2.0</div>

<div class="btn" style="left:19px">Main Menu</div>
<div class="btn" style="left:104px">Calibration</div>
<div class="btn" style="left:446px">Save</div>
<div class="btn" style="left:531px">Quit</div>

<script>
(function(){
var c=document.getElementById('cie');if(!c||!c.getContext)return;var g=c.getContext('2d');
var W=251,H=256,S=284.2,OX=-0.1,OY=255.56,GAMMA=2.2,DESAT=0,BLUR=3;
var P="49.4,254.1 49.4,254.1 49.3,254.2 49.3,254.2 49.2,254.2 49.2,254.2 49.2,254.2 49.1,254.2 49.1,254.2 49.0,254.2 48.9,254.2 48.9,254.2 48.8,254.2 48.8,254.2 48.7,254.2 48.7,254.1 48.6,254.1 48.5,254.1 48.5,254.0 48.4,254.0 48.3,253.9 48.2,253.8 48.1,253.8 48.0,253.7 47.9,253.6 47.8,253.5 47.6,253.4 47.5,253.3 47.3,253.1 47.2,253.0 47.0,252.8 46.8,252.6 46.6,252.5 46.4,252.3 46.2,252.1 45.9,251.9 45.7,251.6 45.4,251.4 45.1,251.1 44.8,250.8 44.4,250.5 44.0,250.2 43.7,249.9 43.2,249.5 42.8,249.1 42.4,248.7 41.9,248.2 41.4,247.7 40.8,247.1 40.3,246.5 39.7,245.9 39.1,245.1 38.4,244.2 37.7,243.2 36.9,242.0 36.1,240.7 35.2,239.1 34.2,237.4 33.2,235.5 32.2,233.4 31.0,230.9 29.9,228.1 28.6,225.1 27.3,221.7 25.8,217.8 24.3,213.6 22.7,209.0 21.1,204.0 19.4,198.5 17.8,192.5 16.1,186.0 14.4,179.1 12.8,171.7 11.2,163.9 9.5,155.6 8.0,146.9 6.6,138.3 5.3,129.4 4.1,120.4 3.1,111.3 2.2,102.5 1.6,94.0 1.2,85.5 1.0,77.3 1.0,69.5 1.3,62.0 1.9,54.9 2.7,48.3 3.9,42.4 5.3,37.0 7.0,32.3 8.9,28.2 11.0,24.8 13.2,22.2 15.7,20.5 18.3,19.3 21.0,18.6 23.8,18.5 26.6,18.9 29.5,19.8 32.4,20.8 35.2,21.9 38.1,23.3 41.0,24.9 43.9,26.5 46.6,28.1 49.4,29.9 52.1,31.6 54.7,33.4 57.4,35.3 60.0,37.2 62.6,39.2 65.2,41.2 67.7,43.3 70.3,45.4 72.9,47.5 75.4,49.7 78.0,51.9 80.5,54.2 83.1,56.5 85.6,58.8 88.2,61.1 90.7,63.5 93.2,65.9 95.8,68.3 98.3,70.7 100.8,73.2 103.4,75.6 105.9,78.1 108.5,80.5 111.0,83.0 113.5,85.5 116.1,88.0 118.6,90.5 121.1,93.0 123.6,95.4 126.1,97.9 128.6,100.4 131.1,102.8 133.5,105.3 136.0,107.7 138.4,110.1 140.8,112.5 143.2,114.9 145.6,117.3 147.9,119.6 150.2,121.9 152.5,124.2 154.7,126.4 156.9,128.6 159.1,130.8 161.3,132.9 163.4,135.0 165.4,137.0 167.4,139.0 169.4,141.0 171.2,142.9 173.0,144.7 174.8,146.4 176.5,148.1 178.1,149.7 179.7,151.3 181.2,152.8 182.7,154.3 184.1,155.7 185.4,156.9 186.5,158.1 187.7,159.3 189.1,160.6 190.8,162.4 192.8,164.3 194.7,166.2 196.4,167.9 197.8,169.3 199.0,170.5 200.1,171.6 201.1,172.6 202.0,173.5 202.8,174.3 203.6,175.1 204.2,175.7 204.8,176.3 205.4,176.8 205.8,177.3 206.2,177.7 206.6,178.0 206.9,178.3 207.1,178.6 207.4,178.8 207.6,179.1 207.9,179.4 208.1,179.6 208.3,179.8 208.5,179.9 208.6,180.0 208.6,180.1 208.7,180.2 208.7,180.2".split(' ');
var oc=document.createElement('canvas');oc.width=W;oc.height=H;var og=oc.getContext('2d');
var img=og.createImageData(W,H),d=img.data;
function gam(v){v=Math.max(0,Math.min(1,v));return Math.pow(v,1/GAMMA);}
for(var py=0;py<H;py++){for(var px=0;px<W;px++){
 var x=(px+0.5-OX)/S,y=Math.max(0.004,(OY-(py+0.5))/S);
 var X=x/y,Y=1,Z=Math.max(0,1-x-y)/y;
 var r=2.3706743*X-0.9000405*Y-0.4706338*Z,gg=-0.5138850*X+1.4253036*Y+0.0885814*Z,b=0.0052982*X-0.0146949*Y+1.0093968*Z;
 var m=Math.min(r,gg,b);if(m<0){r-=m*DESAT;gg-=m*DESAT;b-=m*DESAT;}
 r=Math.max(0,r);gg=Math.max(0,gg);b=Math.max(0,b);
 var M=Math.max(r,gg,b)||1;r/=M;gg/=M;b/=M;
 var k=(py*W+px)*4;d[k]=Math.round(gam(r)*255);d[k+1]=Math.round(gam(gg)*255);d[k+2]=Math.round(gam(b)*255);d[k+3]=255;
}}
og.putImageData(img,0,0);
g.save();g.beginPath();
for(var i=0;i<P.length;i++){var q=P[i].split(',');if(i==0)g.moveTo(+q[0],+q[1]);else g.lineTo(+q[0],+q[1]);}
g.closePath();g.clip();
g.filter='blur('+BLUR+'px)';
g.drawImage(oc,0,0);
g.restore();
})();
</script>
</body></html>
